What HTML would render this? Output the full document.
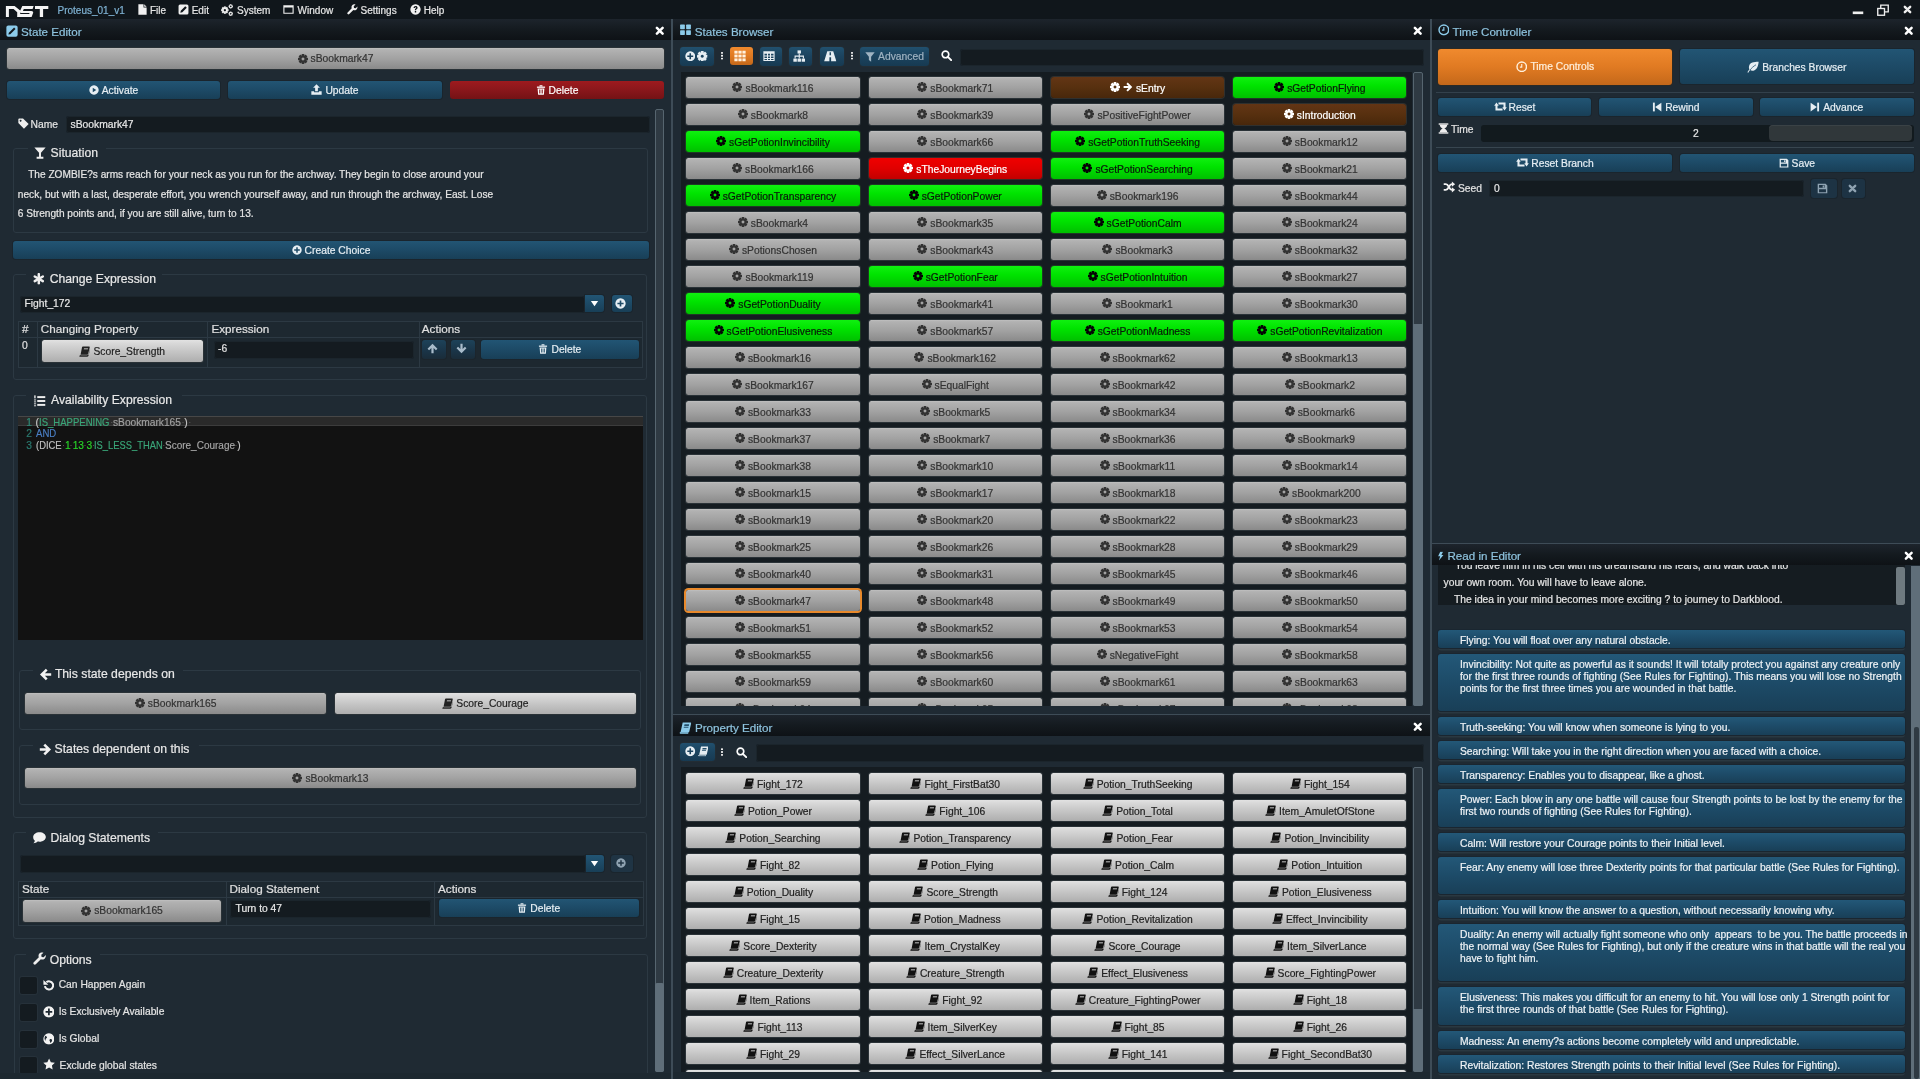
<!DOCTYPE html>
<html><head><meta charset="utf-8"><title>NST</title><style>
*{margin:0;padding:0;box-sizing:border-box}
html,body{width:1920px;height:1079px;overflow:hidden;background:#1f2a33;font-family:"Liberation Sans", sans-serif;-webkit-text-stroke-width:0.2px}
div,svg{position:absolute}
.t{white-space:nowrap;line-height:1}
.i{position:absolute}
.b{display:flex;align-items:center;justify-content:center;white-space:nowrap;line-height:1;border-radius:3px}
.b svg{position:static}
.gray{background:linear-gradient(#c0c0c0,#b2b2b2 8%,#a2a2a2 50%,#8a8a8a);color:#333;box-shadow:0 0 0 1px #2a3237;border-radius:2.5px}
.prop{background:linear-gradient(#e2e2e2,#d8d8d8 15%,#c4c4c4 55%,#aeaeae);color:#222;box-shadow:0 0 0 1px #2a3237;border-radius:2.5px}
.green{background:linear-gradient(#10f010,#00e400 40%,#00c000);color:#0a1a0a;box-shadow:0 0 0 1px #1e3a24}
.red{background:linear-gradient(#f00000,#e00000 50%,#c20000);color:#fff;box-shadow:0 0 0 1px #3a2a2a}
.brown{background:linear-gradient(#633515,#57300f 50%,#48270b);color:#fff;box-shadow:0 0 0 1px #30302e}
.blue{background:linear-gradient(#225574,#1d4a66 50%,#183f57);color:#e6eef3;box-shadow:0 0 0 1px #1a252d}
.dred{background:linear-gradient(#9e1a1e,#8a171b 50%,#741215);color:#fff}
.orange{background:linear-gradient(#f08a2e,#e07a22 50%,#c4681a);color:#fff}
.hdr{background:linear-gradient(#1d242c,#141a1f 50%,#0e1216)}
.inp{background:#141b20;border-radius:3px;box-shadow:inset 0 0 0 1px #1b252c}
.fs{border:1px solid #2c3943;border-radius:3px}
.sb{border:1px solid #56656f;border-radius:2px;background:#2f3a43}
</style></head>
<body>
<svg width="0" height="0" style="position:absolute">
<defs>
<symbol id="gear" viewBox="0 0 16 16"><g fill="currentColor"><path fill-rule="evenodd" d="M8 1.9a6.1 6.1 0 1 0 0.001 0z M8 5.7a2.3 2.3 0 1 1 -0.001 0z"/><g id="gt"><rect x="5.9" y="0" width="4.2" height="3.2" rx="0.6"/><rect x="5.9" y="12.8" width="4.2" height="3.2" rx="0.6"/><rect x="0" y="5.9" width="3.2" height="4.2" rx="0.6"/><rect x="12.8" y="5.9" width="3.2" height="4.2" rx="0.6"/></g><use href="#gt" transform="rotate(45 8 8)"/></g></symbol>
<symbol id="book" viewBox="0 0 16 16"><g fill="currentColor"><path d="M5.6 0.8h8.9c0.8 0 1.3 0.6 1.1 1.3L13.3 11.6c-0.2 0.6-0.7 1-1.3 1H2.3L4.4 1.8c0.2-0.6 0.6-1 1.2-1z"/><path d="M1.6 13.2h10.6c0.9 0 1.6-0.5 1.9-1.3L15.6 5.2l0.3 0.5-2.1 8.6c-0.3 1-1 1.5-2 1.5H1.8c-0.9 0-1.4-0.6-1.2-1.4z"/></g><path fill="#8a8a8a" d="M7.3 3h6l-0.4 2H6.8z"/><path fill="#e8e8e8" d="M2.1 13.3h10l-0.15 0.6h-10z" opacity="0.9"/></symbol>
<symbol id="bookl" viewBox="0 0 16 16"><path fill="currentColor" d="M4.6 0.8h10.6c0.5 0 0.8 0.4 0.7 0.9L13.4 12.6c-0.1 0.5-0.5 0.8-1 0.8H1.8L4.6 0.8z"/><path fill="currentColor" d="M1.6 13.4h10.8l-0.5 2.1H1.3c-0.7 0-1.1-0.5-1-1.1z"/><path fill="#24506c" d="M7 3h6.2l-0.45 2.2H6.5z M6.2 6.3h6.2l-0.3 1.2H5.9z"/><path fill="#24506c" d="M1.9 13.9h9.9l-0.15 0.5H1.75z"/></symbol>
<symbol id="close" viewBox="0 0 16 16"><path d="M3.2 3.2L12.8 12.8M12.8 3.2L3.2 12.8" stroke="currentColor" stroke-width="4.2" stroke-linecap="round"/></symbol>
<symbol id="plusc" viewBox="0 0 16 16"><path fill-rule="evenodd" fill="currentColor" d="M8 0.5a7.5 7.5 0 1 0 .001 0z M6.8 3.5h2.4v3.3h3.3v2.4H9.2v3.3H6.8V9.2H3.5V6.8h3.3z"/></symbol>
<symbol id="playc" viewBox="0 0 16 16"><path fill-rule="evenodd" fill="currentColor" d="M8 0.5a7.5 7.5 0 1 0 .001 0z M6 4.3l5.6 3.7L6 11.7z"/></symbol>
<symbol id="upload" viewBox="0 0 16 16"><g fill="currentColor"><path d="M8 0.5l5 5H10v5H6v-5H3z"/><path d="M0.5 10.5h4v1.5h7v-1.5h4v5h-15z"/></g></symbol>
<symbol id="trash" viewBox="0 0 16 16"><g fill="currentColor"><rect x="5.5" y="0.5" width="5" height="2" rx="0.6"/><rect x="1.5" y="2.5" width="13" height="2"/><path fill-rule="evenodd" d="M2.6 5.5h10.8l-0.8 10H3.4z M5 7v6.5h1.2V7z M7.4 7v6.5h1.2V7z M9.8 7v6.5h1.2V7z"/></g></symbol>
<symbol id="tag" viewBox="0 0 16 16"><path fill-rule="evenodd" fill="currentColor" d="M0.5 1.8v5.6l8.2 8.2 6.8-6.8-8.2-8.2H1.8a1.3 1.3 0 0 0-1.3 1.2z M3.8 2.6a1.3 1.3 0 1 0 .001 0z"/></symbol>
<symbol id="glass" viewBox="0 0 16 16"><g fill="currentColor"><path d="M0.5 0.5h15L9.3 7.8v5.2h3.2v2.5h-9v-2.5h3.2V7.8z"/></g></symbol>
<symbol id="asterisk" viewBox="0 0 16 16"><g stroke="currentColor" stroke-width="3.4" stroke-linecap="round"><path d="M8 1.5v13"/><path d="M2.4 4.8l11.2 6.4"/><path d="M2.4 11.2l11.2-6.4"/></g></symbol>
<symbol id="listol" viewBox="0 0 16 16"><g fill="currentColor"><rect x="5" y="1.5" width="11" height="2.6"/><rect x="5" y="6.7" width="11" height="2.6"/><rect x="5" y="11.9" width="11" height="2.6"/><rect x="1" y="0.5" width="1.8" height="4"/><rect x="0.6" y="6" width="2.8" height="1.2"/><rect x="0.6" y="8.6" width="2.8" height="1.2"/><rect x="0.6" y="11.2" width="2.8" height="1.2"/><rect x="0.6" y="13.8" width="2.8" height="1.2"/></g></symbol>
<symbol id="arrowl" viewBox="0 0 16 16"><path fill="currentColor" d="M1.2 8L8.4 0.8 10.6 3 7.2 6.4H15V9.6H7.2L10.6 13 8.4 15.2z"/></symbol>
<symbol id="arrowr" viewBox="0 0 16 16"><path fill="currentColor" d="M14.8 8L7.6 0.8 5.4 3 8.8 6.4H1V9.6H8.8L5.4 13 7.6 15.2z"/></symbol>
<symbol id="arrowu" viewBox="0 0 16 16"><path fill="currentColor" d="M8 1.2L15.2 8.4 13 10.6 9.6 7.2V15H6.4V7.2L3 10.6 0.8 8.4z"/></symbol>
<symbol id="arrowd" viewBox="0 0 16 16"><path fill="currentColor" d="M8 14.8L15.2 7.6 13 5.4 9.6 8.8V1H6.4V8.8L3 5.4 0.8 7.6z"/></symbol>
<symbol id="comment" viewBox="0 0 16 16"><path fill="currentColor" d="M8 1.5c4.2 0 7.5 2.5 7.5 5.6s-3.3 5.6-7.5 5.6c-0.8 0-1.5-0.1-2.2-0.2C4.5 13.6 2.8 14.5 0.8 14.6c1-1 1.6-2 1.7-3C1.3 10.6 0.5 9 0.5 7.1 0.5 4 3.8 1.5 8 1.5z"/></symbol>
<symbol id="wrench" viewBox="0 0 16 16"><path fill="currentColor" d="M15.2 3.6l-2.6 2.6-2.4-0.4-0.4-2.4 2.6-2.6C10.6 0.1 8.4 0.6 7.3 2.1 6.4 3.3 6.3 4.9 6.9 6.2L0.9 12.2a1.7 1.7 0 0 0 2.4 2.4l6-6c1.3 0.6 2.9 0.5 4.1-0.4 1.5-1.1 2-3.3 1.8-4.6z"/></symbol>
<symbol id="undo" viewBox="0 0 16 16"><path d="M4.6 4.4A5.6 5.6 0 1 1 2.6 9.6" fill="none" stroke="currentColor" stroke-width="2.8"/><path fill="currentColor" d="M0.6 1.2v6.6h6.6z"/></symbol>
<symbol id="globe" viewBox="0 0 16 16"><path fill-rule="evenodd" fill="currentColor" d="M8 0.5a7.5 7.5 0 1 0 .001 0z M3.2 3.6C4.5 3.9 5.6 5 5.4 6.2 5.2 7.2 4 7.4 3.6 8.4 3.3 9.2 3.9 10 3.4 10.6 2.6 10 2.1 8.9 2.1 7.6 2.1 6.1 2.5 4.7 3.2 3.6z M9.8 8.2C10.9 8 12 8.6 12.2 9.6 12.5 10.8 11.8 12 10.8 12.8 10 13.4 9.4 13 9.5 12.2 9.6 11.4 9 11 8.8 10.3 8.6 9.3 9 8.4 9.8 8.2z"/></symbol>
<symbol id="star" viewBox="0 0 16 16"><path fill="currentColor" d="M8 0.6l2.3 4.9 5.3 0.7-3.9 3.7 1 5.3L8 12.6l-4.7 2.6 1-5.3L0.4 6.2l5.3-0.7z"/></symbol>
<symbol id="clock" viewBox="0 0 16 16"><circle cx="8" cy="8" r="6.6" fill="none" stroke="currentColor" stroke-width="2"/><path d="M8 4.2v4.3h-2.6" fill="none" stroke="currentColor" stroke-width="1.6"/></symbol>
<symbol id="leaf" viewBox="0 0 16 16"><path fill="currentColor" d="M15.5 1C9 1 4 2 2.8 6.5 2.3 8.3 2.6 9.8 3.3 11 2.2 12.2 1.2 13.6 0.5 15l1.2 0.5c0.6-1.2 1.5-2.4 2.5-3.5C5.4 13 7.4 13.3 9.5 12.5 14 10.8 15.2 5 15.5 1z"/><path d="M4 12c2-2.5 4.5-5 8-7" stroke="#1f4d6d" stroke-width="1" fill="none"/></symbol>
<symbol id="retweet" viewBox="0 0 16 16"><g fill="currentColor"><path d="M0.2 7.2L3 3.1 5.8 7.2H4.3V10.5H10.5V12.9H1.8V7.2z"/><path d="M15.8 8.8L13 12.9 10.2 8.8H11.7V5.5H5.5V3.1H14.2V8.8z"/></g></symbol>
<symbol id="stepb" viewBox="0 0 16 16"><g fill="currentColor"><rect x="1.5" y="1" width="3" height="14"/><path d="M15 1v14L5 8z"/></g></symbol>
<symbol id="stepf" viewBox="0 0 16 16"><g fill="currentColor"><rect x="11.5" y="1" width="3" height="14"/><path d="M1 1v14l10-7z"/></g></symbol>
<symbol id="hourglass" viewBox="0 0 16 16"><g fill="currentColor"><rect x="1" y="0.5" width="14" height="2"/><rect x="1" y="13.5" width="14" height="2"/><path d="M2.5 2.5h11c0 3-2.5 4.5-4.3 5.5 1.8 1 4.3 2.5 4.3 5.5h-11c0-3 2.5-4.5 4.3-5.5C5 7 2.5 5.5 2.5 2.5z"/></g></symbol>
<symbol id="floppy" viewBox="0 0 16 16"><path fill-rule="evenodd" fill="currentColor" d="M1 1h11.5L15 3.5V15H1z M3 3v4h8V3z M8.2 3.6h2v2.8h-2z M3 9v4.5h10V9z"/></symbol>
<symbol id="random" viewBox="0 0 16 16"><g fill="none" stroke="currentColor" stroke-width="2.4"><path d="M0.5 4.2H3.5C7.5 4.2 7.5 11.8 11.5 11.8H12.5"/><path d="M0.5 11.8H3.5C7.5 11.8 7.5 4.2 11.5 4.2H12.5"/></g><g fill="currentColor"><path d="M11.5 0.8L15.8 4.2 11.5 7.6z"/><path d="M11.5 8.4L15.8 11.8 11.5 15.2z"/></g></symbol>
<symbol id="bolt" viewBox="0 0 16 16"><path fill="currentColor" d="M7.5 0.5h5L9.6 6.2h3.6L5.2 15.8l2.2-7.2H3.8z"/></symbol>
<symbol id="th" viewBox="0 0 16 16"><g fill="currentColor"><rect x="0.5" y="1" width="4.3" height="3.8"/><rect x="5.85" y="1" width="4.3" height="3.8"/><rect x="11.2" y="1" width="4.3" height="3.8"/><rect x="0.5" y="6.1" width="4.3" height="3.8"/><rect x="5.85" y="6.1" width="4.3" height="3.8"/><rect x="11.2" y="6.1" width="4.3" height="3.8"/><rect x="0.5" y="11.2" width="4.3" height="3.8"/><rect x="5.85" y="11.2" width="4.3" height="3.8"/><rect x="11.2" y="11.2" width="4.3" height="3.8"/></g></symbol>
<symbol id="table" viewBox="0 0 16 16"><path fill-rule="evenodd" fill="currentColor" d="M0.5 1.5h15v13h-15z M2 5v2.2h3.3V5z M6.7 5v2.2h2.6V5z M10.7 5v2.2H14V5z M2 8.5v2.2h3.3V8.5z M6.7 8.5v2.2h2.6V8.5z M10.7 8.5v2.2H14V8.5z M2 12v1.3h3.3V12z M6.7 12v1.3h2.6V12z M10.7 12v1.3H14V12z"/></symbol>
<symbol id="sitemap" viewBox="0 0 16 16"><g fill="currentColor"><rect x="5.8" y="0.5" width="4.4" height="4"/><rect x="0.5" y="11" width="4.4" height="4"/><rect x="5.8" y="11" width="4.4" height="4"/><rect x="11.1" y="11" width="4.4" height="4"/><path d="M7.3 4.5h1.4v2.6h5.3v3.9h-1.4V8.5H8.7v2.5H7.3V8.5H3.4v2.5H2V7.1h5.3z"/></g></symbol>
<symbol id="road" viewBox="0 0 16 16"><path fill-rule="evenodd" fill="currentColor" d="M4.2 1.5h7.6l4 13H0.2z M7.1 3v3.6h1.8V3z M6.9 9.3v5.2h2.2V9.3z"/></symbol>
<symbol id="filter" viewBox="0 0 16 16"><path fill="currentColor" d="M0.5 0.5h15L9.8 7.5v8l-3.6-2.8V7.5z"/></symbol>
<symbol id="search" viewBox="0 0 16 16"><circle cx="6.5" cy="6.5" r="4.8" fill="none" stroke="currentColor" stroke-width="2.4"/><path d="M10 10l4.8 4.8" stroke="currentColor" stroke-width="2.8" stroke-linecap="round"/></symbol>
<symbol id="vdots" viewBox="0 0 16 16"><g fill="currentColor"><rect x="6" y="0.5" width="4" height="3.6" rx="1.2"/><rect x="6" y="6.2" width="4" height="3.6" rx="1.2"/><rect x="6" y="11.9" width="4" height="3.6" rx="1.2"/></g></symbol>
<symbol id="file" viewBox="0 0 16 16"><path fill="currentColor" d="M2 0.5h7.5v4.5H14v10.5H2z M10.5 0.5l3.5 3.5h-3.5z"/></symbol>
<symbol id="edit" viewBox="0 0 16 16"><path fill-rule="evenodd" fill="currentColor" d="M3 0.8h10a2.2 2.2 0 0 1 2.2 2.2v10a2.2 2.2 0 0 1-2.2 2.2H3A2.2 2.2 0 0 1 0.8 13V3A2.2 2.2 0 0 1 3 0.8z M10.5 3.2L4 9.7 3.4 12.6l2.9-0.6 6.5-6.5z"/></symbol>
<symbol id="cogs" viewBox="0 0 16 16"><g fill="currentColor"><g transform="translate(0.2 3.2) scale(0.62)"><path fill-rule="evenodd" d="M8 1.9a6.1 6.1 0 1 0 0.001 0z M8 5.6a2.4 2.4 0 1 1 -0.001 0z"/><g id="gt2"><rect x="5.9" y="0" width="4.2" height="3.2"/><rect x="5.9" y="12.8" width="4.2" height="3.2"/><rect x="0" y="5.9" width="3.2" height="4.2"/><rect x="12.8" y="5.9" width="3.2" height="4.2"/></g><use href="#gt2" transform="rotate(45 8 8)"/></g><g transform="translate(10 0.2) scale(0.37)"><path fill-rule="evenodd" d="M8 1.9a6.1 6.1 0 1 0 0.001 0z M8 5.2a2.8 2.8 0 1 1 -0.001 0z"/><use href="#gt2"/><use href="#gt2" transform="rotate(45 8 8)"/></g><g transform="translate(10 10) scale(0.37)"><path fill-rule="evenodd" d="M8 1.9a6.1 6.1 0 1 0 0.001 0z M8 5.2a2.8 2.8 0 1 1 -0.001 0z"/><use href="#gt2"/><use href="#gt2" transform="rotate(45 8 8)"/></g></g></symbol>
<symbol id="windowi" viewBox="0 0 16 16"><path fill-rule="evenodd" fill="currentColor" d="M0.5 1.8h15v12.4h-15z M2.1 5.2v7.4h11.8V5.2z"/></symbol>
<symbol id="question" viewBox="0 0 16 16"><path fill-rule="evenodd" fill="currentColor" d="M8 0.5a7.5 7.5 0 1 0 .001 0z M5.2 5.8C5.3 4 6.5 3 8.1 3c1.7 0 2.9 1 2.9 2.4 0 1.1-0.6 1.7-1.4 2.2-0.6 0.4-0.7 0.6-0.7 1.2v0.4H7.1V8.6c0-1 0.3-1.5 1.1-2 0.5-0.3 0.8-0.6 0.8-1 0-0.5-0.4-0.8-0.9-0.8-0.6 0-1 0.4-1 1z M7 10.3h2v2.2H7z"/></symbol>
<symbol id="minimize" viewBox="0 0 16 16"><rect x="1" y="10" width="14" height="3.5" fill="currentColor"/></symbol>
<symbol id="restore" viewBox="0 0 16 16"><g fill="none" stroke="currentColor" stroke-width="1.8"><rect x="1" y="6" width="9" height="9"/><path d="M5 6V1.5h10v9h-5"/></g></symbol>
<symbol id="caretd" viewBox="0 0 16 16"><path fill="currentColor" d="M1.5 3.5h13L8 13z"/></symbol>
<symbol id="pencilsq" viewBox="0 0 16 16"><path fill-rule="evenodd" fill="currentColor" d="M3 0.5h10a2.5 2.5 0 0 1 2.5 2.5v10a2.5 2.5 0 0 1-2.5 2.5H3A2.5 2.5 0 0 1 0.5 13V3A2.5 2.5 0 0 1 3 0.5z M10.8 3.3L3.8 10.3 3.2 12.8l2.5-0.6 7-7z"/></symbol>
<symbol id="thl" viewBox="0 0 16 16"><g fill="currentColor"><rect x="0.5" y="0.8" width="6.6" height="6.4" rx="0.8"/><rect x="8.9" y="0.8" width="6.6" height="6.4" rx="0.8"/><rect x="0.5" y="8.8" width="6.6" height="6.4" rx="0.8"/><rect x="8.9" y="8.8" width="6.6" height="6.4" rx="0.8"/></g></symbol>
</defs>
</svg>
<div id="root" style="left:0;top:0;width:1920px;height:1079px;will-change:transform">
<div style="left:0px;top:0px;width:1920px;height:19px;background:#10161b"></div>
<svg style="left:0;top:0;width:52px;height:19px" viewBox="0 0 52 19"><g fill="#f4f4f4">
<path d="M5.9 5.9H14.6L20.2 10.6V16.9H17.2V12.2L13.6 9H8.9V16.9H5.9Z"/>
<path d="M22.3 5.9H33.6L32.6 9H23.8L22.9 10.9H31.2C33 10.9 33.6 12 33 13.3L31.6 16.9H17.6L18.8 13.9H29.2L29.6 13H21.3C19.8 13 19.6 12 20 11Z"/>
<path d="M35 5.9H48.3V9H43.1V16.9H39.8V9H35Z"/>
</g></svg>
<div class="t" style="left:57.50px;top:6.03px;font-size:10px;color:#7fb2d3;">Proteus_01_v1</div>
<svg class="i" style="left:136.8px;top:3.5px;width:11px;height:11px;color:#f0f0f0;" viewBox="0 0 16 16"><use href="#file"/></svg>
<div class="t" style="left:150.00px;top:6.03px;font-size:10px;color:#e6e6e6;">File</div>
<svg class="i" style="left:178.4px;top:3.5px;width:11px;height:11px;color:#f0f0f0;" viewBox="0 0 16 16"><use href="#edit"/></svg>
<div class="t" style="left:191.70px;top:6.03px;font-size:10px;color:#e6e6e6;">Edit</div>
<svg class="i" style="left:221px;top:3.5px;width:12px;height:12px;color:#f0f0f0;" viewBox="0 0 16 16"><use href="#cogs"/></svg>
<div class="t" style="left:237.00px;top:6.03px;font-size:10px;color:#e6e6e6;">System</div>
<svg class="i" style="left:283px;top:3.5px;width:11px;height:11px;color:#f0f0f0;" viewBox="0 0 16 16"><use href="#windowi"/></svg>
<div class="t" style="left:297.60px;top:6.03px;font-size:10px;color:#e6e6e6;">Window</div>
<svg class="i" style="left:346.7px;top:3.5px;width:11px;height:11px;color:#f0f0f0;" viewBox="0 0 16 16"><use href="#wrench"/></svg>
<div class="t" style="left:360.50px;top:6.03px;font-size:10px;color:#e6e6e6;">Settings</div>
<svg class="i" style="left:410.4px;top:3.5px;width:11px;height:11px;color:#f0f0f0;" viewBox="0 0 16 16"><use href="#question"/></svg>
<div class="t" style="left:423.70px;top:6.03px;font-size:10px;color:#e6e6e6;">Help</div>
<svg class="i" style="left:1852px;top:4px;width:12px;height:12px;color:#eee;" viewBox="0 0 16 16"><use href="#minimize"/></svg>
<svg class="i" style="left:1876px;top:4px;width:14px;height:12px;color:#eee;" viewBox="0 0 16 16"><use href="#restore"/></svg>
<svg class="i" style="left:1903px;top:5px;width:9px;height:9px;color:#eee;" viewBox="0 0 16 16"><use href="#close"/></svg>
<div class="hdr" style="left:0px;top:19px;width:671px;height:20.5px;"></div>
<svg class="i" style="left:6px;top:24.5px;width:12px;height:12px;color:#8ccbea;" viewBox="0 0 16 16"><use href="#pencilsq"/></svg>
<div class="t" style="left:21.00px;top:25.94px;font-size:11.6px;color:#8ec3de;">State Editor</div>
<svg class="i" style="left:654.8px;top:26px;width:9.5px;height:9.5px;color:#fff;" viewBox="0 0 16 16"><use href="#close"/></svg>
<div class="b gray" style="left:7px;top:48px;width:657px;height:21px;"><svg style="width:10px;height:10px;color:currentColor;flex:none;margin-right:3px;position:relative;top:0.0px" viewBox="0 0 16 16"><use href="#gear"/></svg><span style="font-size:10.3px;position:relative;top:1.0px">sBookmark47</span></div>
<div class="b blue" style="left:7px;top:80.5px;width:213px;height:18.5px;"><svg style="width:10px;height:10px;color:currentColor;flex:none;margin-right:3px;position:relative;top:0.0px" viewBox="0 0 16 16"><use href="#playc"/></svg><span style="font-size:10.3px;position:relative;top:1.0px">Activate</span></div>
<div class="b blue" style="left:228px;top:80.5px;width:214px;height:18.5px;"><svg style="width:11px;height:11px;color:currentColor;flex:none;margin-right:3px;position:relative;top:0.0px" viewBox="0 0 16 16"><use href="#upload"/></svg><span style="font-size:10.3px;position:relative;top:1.0px">Update</span></div>
<div class="b dred" style="left:450px;top:80.5px;width:214px;height:18.5px;"><svg style="width:10px;height:10px;color:currentColor;flex:none;margin-right:3px;position:relative;top:0.0px" viewBox="0 0 16 16"><use href="#trash"/></svg><span style="font-size:10.3px;position:relative;top:1.0px">Delete</span></div>
<div class="sb" style="left:655px;top:109px;width:9px;height:963px;"></div>
<div style="left:655px;top:983px;width:9px;height:89px;background:#5f6e79;border-radius:2px"></div>
<svg class="i" style="left:18px;top:117.5px;width:11px;height:11px;color:#eee;" viewBox="0 0 16 16"><use href="#tag"/></svg>
<div class="t" style="left:30.60px;top:119.79px;font-size:10.3px;color:#e4e4e4;">Name</div>
<div class="inp" style="left:66px;top:116px;width:583.6px;height:17px;"></div>
<div class="t" style="left:70.60px;top:119.79px;font-size:10.3px;color:#e8e8e8;">sBookmark47</div>
<div class="fs" style="left:13.3px;top:147.5px;width:634.4px;height:85px;"></div>
<div style="left:28px;top:140px;width:78px;height:14px;background:#1f2a33"></div>
<svg class="i" style="left:34px;top:147px;width:12px;height:12px;color:#eee;" viewBox="0 0 16 16"><use href="#glass"/></svg>
<div class="t" style="left:50.60px;top:146.87px;font-size:12.2px;color:#e8e8e8;">Situation</div>
<div class="t" style="left:28.20px;top:170.31px;font-size:10.12px;color:#e6e6e6;">The ZOMBIE?s arms reach for your neck as you run for the archway. They begin to close around your</div>
<div class="t" style="left:17.80px;top:189.81px;font-size:10.17px;color:#e6e6e6;">neck, but with a last, desperate effort, you wrench yourself away, and run through the archway, East. Lose</div>
<div class="t" style="left:17.80px;top:209.31px;font-size:10.15px;color:#e6e6e6;">6 Strength points and, if you are still alive, turn to 13.</div>
<div class="b blue" style="left:13px;top:240.8px;width:636px;height:17.8px;"><svg style="width:10px;height:10px;color:currentColor;flex:none;margin-right:3px;position:relative;top:0.0px" viewBox="0 0 16 16"><use href="#plusc"/></svg><span style="font-size:10.3px;position:relative;top:1.0px">Create Choice</span></div>
<div class="fs" style="left:13.3px;top:273.5px;width:634px;height:106.5px;"></div>
<div style="left:26px;top:266px;width:136px;height:14px;background:#1f2a33"></div>
<svg class="i" style="left:33.4px;top:273px;width:11.6px;height:11.6px;color:#eee;" viewBox="0 0 16 16"><use href="#asterisk"/></svg>
<div class="t" style="left:49.70px;top:272.87px;font-size:12.2px;color:#e8e8e8;">Change Expression</div>
<div class="inp" style="left:20px;top:295.7px;width:565.4px;height:17px;"></div>
<div class="t" style="left:24.50px;top:299.29px;font-size:10.3px;color:#e8e8e8;">Fight_172</div>
<div class="b blue" style="left:585.4px;top:294.8px;width:18.6px;height:17.5px;border-radius:0 3px 3px 0"></div>
<svg class="i" style="left:589px;top:299px;width:11px;height:9px;color:#fff;" viewBox="0 0 16 16"><use href="#caretd"/></svg>
<div class="b blue" style="left:611.7px;top:294.8px;width:20.3px;height:17.5px;"><svg style="width:11px;height:11px;color:currentColor;flex:none;margin-right:3px;position:relative;top:0.0px" viewBox="0 0 16 16"><use href="#plusc"/></svg></div>
<div style="left:18px;top:321px;width:625.2px;height:47px;border:1px solid #2c3943;background:#1d2830"></div>
<div style="left:18px;top:337px;width:625.2px;height:1px;background:#2c3943"></div>
<div style="left:37px;top:321px;width:1px;height:47px;background:#2c3943"></div>
<div style="left:207px;top:321px;width:1px;height:47px;background:#2c3943"></div>
<div style="left:418.5px;top:321px;width:1px;height:47px;background:#2c3943"></div>
<div class="t" style="left:22.00px;top:323.23px;font-size:11.7px;color:#e0e0e0;">#</div>
<div class="t" style="left:40.80px;top:323.23px;font-size:11.7px;color:#e0e0e0;">Changing Property</div>
<div class="t" style="left:211.40px;top:323.23px;font-size:11.7px;color:#e0e0e0;">Expression</div>
<div class="t" style="left:421.80px;top:323.23px;font-size:11.7px;color:#e0e0e0;">Actions</div>
<div class="t" style="left:22.00px;top:340.79px;font-size:10.3px;color:#e0e0e0;">0</div>
<div class="b prop" style="left:41.5px;top:340.4px;width:161.5px;height:22px;"><svg style="width:11px;height:11px;color:currentColor;flex:none;margin-right:3px;position:relative;top:0.3px" viewBox="0 0 16 16"><use href="#book"/></svg><span style="font-size:10.3px;position:relative;top:1px">Score_Strength</span></div>
<div class="inp" style="left:213.6px;top:340.5px;width:200px;height:18px;"></div>
<div class="t" style="left:218.00px;top:344.29px;font-size:10.3px;color:#e0e0e0;">-6</div>
<div class="b blue" style="left:422px;top:340px;width:24px;height:18.6px;background:linear-gradient(#1d4259,#1a3447 60%,#1a2c39);box-shadow:0 0 0 1px #1c252c"><svg style="width:11px;height:11px;color:#a9bccb;flex:none;margin-right:3px;position:relative;top:-0.5px" viewBox="0 0 16 16"><use href="#arrowu"/></svg></div>
<div class="b blue" style="left:451px;top:340px;width:24px;height:18.6px;background:linear-gradient(#1d4259,#1a3447 60%,#1a2c39);box-shadow:0 0 0 1px #1c252c"><svg style="width:11px;height:11px;color:#a9bccb;flex:none;margin-right:3px;position:relative;top:-0.5px" viewBox="0 0 16 16"><use href="#arrowd"/></svg></div>
<div class="b blue" style="left:481px;top:340px;width:157.7px;height:18.6px;"><svg style="width:10px;height:10px;color:currentColor;flex:none;margin-right:3px;position:relative;top:0.0px" viewBox="0 0 16 16"><use href="#trash"/></svg><span style="font-size:10.3px;position:relative;top:1.0px">Delete</span></div>
<div class="fs" style="left:13.3px;top:394.6px;width:634px;height:423.4px;"></div>
<div style="left:26px;top:387px;width:156px;height:14px;background:#1f2a33"></div>
<svg class="i" style="left:32.6px;top:395px;width:13px;height:12px;color:#eee;" viewBox="0 0 16 16"><use href="#listol"/></svg>
<div class="t" style="left:51.00px;top:394.47px;font-size:12.2px;color:#e8e8e8;">Availability Expression</div>
<div style="left:18px;top:415.6px;width:625.4px;height:224.4px;background:#121212"></div>
<div style="left:18px;top:415.6px;width:625.4px;height:10.8px;background:#2a2a2a;border-top:1px solid #474747;border-bottom:1px solid #3c3c3c"></div>
<div class="t" style="left:26.20px;top:417.90px;font-size:10.2px;color:#2f8a76;">1</div>
<div class="t" style="left:26.20px;top:429.00px;font-size:10.2px;color:#2a7a70;">2</div>
<div class="t" style="left:26.20px;top:440.90px;font-size:10.2px;color:#2a7a70;">3</div>
<div class="t" style="left:35.60px;top:417.89px;font-size:10.3px;color:#c8c8c8;-webkit-text-stroke-width:0.15px;transform:scaleX(1.000);transform-origin:0 0">(</div>
<div class="t" style="left:39.40px;top:417.90px;font-size:10.2px;color:#3aa679;-webkit-text-stroke-width:0.15px;transform:scaleX(0.936);transform-origin:0 0">IS_HAPPENING</div>
<div class="t" style="left:110.30px;top:418.04px;font-size:9px;color:#5a5a5a;-webkit-text-stroke-width:0.15px;transform:scaleX(1.000);transform-origin:0 0">·</div>
<div class="t" style="left:113.00px;top:417.90px;font-size:10.2px;color:#a0a0a0;-webkit-text-stroke-width:0.15px;transform:scaleX(1.000);transform-origin:0 0">sBookmark165</div>
<div class="t" style="left:181.40px;top:418.04px;font-size:9px;color:#5a5a5a;-webkit-text-stroke-width:0.15px;transform:scaleX(1.000);transform-origin:0 0">·</div>
<div class="t" style="left:184.20px;top:417.89px;font-size:10.3px;color:#c8c8c8;-webkit-text-stroke-width:0.15px;transform:scaleX(1.000);transform-origin:0 0">)</div>
<div class="t" style="left:188.30px;top:418.04px;font-size:9px;color:#5a5a5a;-webkit-text-stroke-width:0.15px;transform:scaleX(1.000);transform-origin:0 0">·</div>
<div class="t" style="left:36.00px;top:429.00px;font-size:10.2px;color:#4a7fc4;-webkit-text-stroke-width:0.15px;transform:scaleX(0.941);transform-origin:0 0">AND</div>
<div class="t" style="left:35.60px;top:440.90px;font-size:10.2px;color:#c0c0c0;-webkit-text-stroke-width:0.15px;transform:scaleX(0.922);transform-origin:0 0">(DICE</div>
<div class="t" style="left:62.00px;top:441.04px;font-size:9px;color:#5a5a5a;-webkit-text-stroke-width:0.15px;transform:scaleX(1.000);transform-origin:0 0">·</div>
<div class="t" style="left:65.00px;top:440.90px;font-size:10.2px;color:#28d628;-webkit-text-stroke-width:0.15px;transform:scaleX(1.000);transform-origin:0 0">1</div>
<div class="t" style="left:69.60px;top:441.04px;font-size:9px;color:#5a5a5a;-webkit-text-stroke-width:0.15px;transform:scaleX(1.000);transform-origin:0 0">·</div>
<div class="t" style="left:72.70px;top:440.90px;font-size:10.2px;color:#28d628;-webkit-text-stroke-width:0.15px;transform:scaleX(1.000);transform-origin:0 0">13</div>
<div class="t" style="left:83.50px;top:441.04px;font-size:9px;color:#5a5a5a;-webkit-text-stroke-width:0.15px;transform:scaleX(1.000);transform-origin:0 0">·</div>
<div class="t" style="left:86.50px;top:440.90px;font-size:10.2px;color:#28d628;-webkit-text-stroke-width:0.15px;transform:scaleX(1.000);transform-origin:0 0">3</div>
<div class="t" style="left:91.90px;top:441.04px;font-size:9px;color:#5a5a5a;-webkit-text-stroke-width:0.15px;transform:scaleX(1.000);transform-origin:0 0">·</div>
<div class="t" style="left:94.40px;top:440.90px;font-size:10.2px;color:#3aa679;-webkit-text-stroke-width:0.15px;transform:scaleX(0.919);transform-origin:0 0">IS_LESS_THAN</div>
<div class="t" style="left:162.30px;top:441.04px;font-size:9px;color:#5a5a5a;-webkit-text-stroke-width:0.15px;transform:scaleX(1.000);transform-origin:0 0">·</div>
<div class="t" style="left:165.00px;top:440.93px;font-size:10px;color:#a8a8a8;-webkit-text-stroke-width:0.15px;transform:scaleX(1.000);transform-origin:0 0">Score_Courage</div>
<div class="t" style="left:234.50px;top:441.04px;font-size:9px;color:#5a5a5a;-webkit-text-stroke-width:0.15px;transform:scaleX(1.000);transform-origin:0 0">·</div>
<div class="t" style="left:237.30px;top:440.89px;font-size:10.3px;color:#c8c8c8;-webkit-text-stroke-width:0.15px;transform:scaleX(1.000);transform-origin:0 0">)</div>
<div class="fs" style="left:19.3px;top:669.7px;width:622px;height:60px;"></div>
<div style="left:33px;top:662px;width:150px;height:14px;background:#1f2a33"></div>
<svg class="i" style="left:38.8px;top:667.8px;width:13px;height:13px;color:#f2f2f2;" viewBox="0 0 16 16"><use href="#arrowl"/></svg>
<div class="t" style="left:54.90px;top:668.37px;font-size:12.2px;color:#e8e8e8;">This state depends on</div>
<div class="b gray" style="left:25.2px;top:692.6px;width:301px;height:21.2px;"><svg style="width:10px;height:10px;color:currentColor;flex:none;margin-right:3px;position:relative;top:0.0px" viewBox="0 0 16 16"><use href="#gear"/></svg><span style="font-size:10.3px;position:relative;top:1.0px">sBookmark165</span></div>
<div class="b prop" style="left:335px;top:692.6px;width:300.7px;height:21.2px;"><svg style="width:11px;height:11px;color:currentColor;flex:none;margin-right:3px;position:relative;top:0.3px" viewBox="0 0 16 16"><use href="#book"/></svg><span style="font-size:10.3px;position:relative;top:1px">Score_Courage</span></div>
<div class="fs" style="left:19.3px;top:744.5px;width:622px;height:60.5px;"></div>
<div style="left:33px;top:737px;width:166px;height:14px;background:#1f2a33"></div>
<svg class="i" style="left:38.5px;top:742.8px;width:13px;height:13px;color:#f2f2f2;" viewBox="0 0 16 16"><use href="#arrowr"/></svg>
<div class="t" style="left:54.60px;top:743.37px;font-size:12.2px;color:#e8e8e8;">States dependent on this</div>
<div class="b gray" style="left:25.2px;top:767.5px;width:610.5px;height:20.8px;"><svg style="width:10px;height:10px;color:currentColor;flex:none;margin-right:3px;position:relative;top:0.0px" viewBox="0 0 16 16"><use href="#gear"/></svg><span style="font-size:10.3px;position:relative;top:1.0px">sBookmark13</span></div>
<div class="fs" style="left:13.3px;top:832.3px;width:634px;height:107.1px;"></div>
<div style="left:26px;top:825px;width:132px;height:14px;background:#1f2a33"></div>
<svg class="i" style="left:32.4px;top:831.2px;width:15px;height:13.5px;color:#f2f2f2;" viewBox="0 0 16 16"><use href="#comment"/></svg>
<div class="t" style="left:50.40px;top:832.27px;font-size:12.2px;color:#e8e8e8;">Dialog Statements</div>
<div class="inp" style="left:20px;top:854.9px;width:565.5px;height:17.8px;"></div>
<div class="b blue" style="left:585.5px;top:854.7px;width:18.1px;height:17.3px;border-radius:0 3px 3px 0"></div>
<svg class="i" style="left:589px;top:859px;width:11px;height:9px;color:#fff;" viewBox="0 0 16 16"><use href="#caretd"/></svg>
<div class="b blue" style="left:611.3px;top:854.7px;width:21.7px;height:17.3px;background:#1f3444"><svg style="width:10px;height:10px;color:#8fa3b2;flex:none;margin-right:3px;position:relative;top:0.0px" viewBox="0 0 16 16"><use href="#plusc"/></svg></div>
<div style="left:18px;top:880.8px;width:625.7px;height:45.2px;border:1px solid #2c3943;background:#1d2830"></div>
<div style="left:18px;top:897px;width:625.7px;height:1px;background:#2c3943"></div>
<div style="left:225.5px;top:880.8px;width:1px;height:45.2px;background:#2c3943"></div>
<div style="left:434.4px;top:880.8px;width:1px;height:45.2px;background:#2c3943"></div>
<div class="t" style="left:22.00px;top:882.93px;font-size:11.7px;color:#e0e0e0;">State</div>
<div class="t" style="left:229.50px;top:882.93px;font-size:11.7px;color:#e0e0e0;">Dialog Statement</div>
<div class="t" style="left:438.00px;top:882.93px;font-size:11.7px;color:#e0e0e0;">Actions</div>
<div class="b gray" style="left:23px;top:899.6px;width:198px;height:22px;"><svg style="width:10px;height:10px;color:currentColor;flex:none;margin-right:3px;position:relative;top:0.0px" viewBox="0 0 16 16"><use href="#gear"/></svg><span style="font-size:10.3px;position:relative;top:1.0px">sBookmark165</span></div>
<div class="inp" style="left:230.3px;top:900px;width:200.7px;height:17.5px;"></div>
<div class="t" style="left:235.50px;top:903.79px;font-size:10.3px;color:#e8e8e8;">Turn to 47</div>
<div class="b blue" style="left:439px;top:899.3px;width:199.5px;height:17.5px;"><svg style="width:10px;height:10px;color:currentColor;flex:none;margin-right:3px;position:relative;top:0.0px" viewBox="0 0 16 16"><use href="#trash"/></svg><span style="font-size:10.3px;position:relative;top:1.0px">Delete</span></div>
<div class="fs" style="left:13.6px;top:953.5px;width:634px;height:130px;"></div>
<div style="left:26px;top:946px;width:74px;height:14px;background:#1f2a33"></div>
<svg class="i" style="left:32.5px;top:952px;width:13.5px;height:13.5px;color:#eee;" viewBox="0 0 16 16"><use href="#wrench"/></svg>
<div class="t" style="left:49.70px;top:953.67px;font-size:12.2px;color:#e8e8e8;">Options</div>
<div style="left:20px;top:977.4px;width:17.3px;height:16.8px;background:#141b20;border-radius:2px;box-shadow:0 0 0 1px #26313a"></div>
<svg class="i" style="left:42.6px;top:979.0px;width:11.8px;height:11.8px;color:#f2f2f2;" viewBox="0 0 16 16"><use href="#undo"/></svg>
<div class="t" style="left:58.70px;top:979.99px;font-size:10.3px;color:#e4e4e4;">Can Happen Again</div>
<div style="left:20px;top:1003.8px;width:17.3px;height:16.8px;background:#141b20;border-radius:2px;box-shadow:0 0 0 1px #26313a"></div>
<svg class="i" style="left:42.6px;top:1006.0999999999999px;width:11.8px;height:11.8px;color:#f2f2f2;" viewBox="0 0 16 16"><use href="#plusc"/></svg>
<div class="t" style="left:58.70px;top:1007.09px;font-size:10.3px;color:#e4e4e4;">Is Exclusively Available</div>
<div style="left:20px;top:1030.9px;width:17.3px;height:16.8px;background:#141b20;border-radius:2px;box-shadow:0 0 0 1px #26313a"></div>
<svg class="i" style="left:42.6px;top:1033.0px;width:11.8px;height:11.8px;color:#f2f2f2;" viewBox="0 0 16 16"><use href="#globe"/></svg>
<div class="t" style="left:58.70px;top:1033.99px;font-size:10.3px;color:#e4e4e4;">Is Global</div>
<div style="left:20px;top:1057.3px;width:17.3px;height:16.8px;background:#141b20;border-radius:2px;box-shadow:0 0 0 1px #26313a"></div>
<svg class="i" style="left:42.6px;top:1058.3999999999999px;width:12.2px;height:12.2px;color:#f2f2f2;" viewBox="0 0 16 16"><use href="#star"/></svg>
<div class="t" style="left:59.60px;top:1060.59px;font-size:10.3px;color:#e4e4e4;">Exclude global states</div>
<div style="left:0px;top:1072.5px;width:671px;height:6.5px;background:#1d2830"></div>
<div style="left:671.2px;top:19px;width:1.8px;height:1060px;background:#3e4c57"></div>
<div class="hdr" style="left:673px;top:19px;width:757px;height:20.5px;"></div>
<svg class="i" style="left:679px;top:24px;width:13px;height:11.5px;color:#8ccbea;" viewBox="0 0 16 16"><use href="#thl"/></svg>
<div class="t" style="left:694.80px;top:25.94px;font-size:11.6px;color:#8ec3de;">States Browser</div>
<svg class="i" style="left:1412.5px;top:26px;width:9.5px;height:9.5px;color:#fff;" viewBox="0 0 16 16"><use href="#close"/></svg>
<div class="b blue" style="left:680.3px;top:47.3px;width:33.6px;height:18.4px;background:linear-gradient(#21506e,#1b435e 50%,#173a52);box-shadow:0 0 0 1px #232d34"><svg style="width:10.5px;height:10.5px;color:currentColor;flex:none;margin-right:2px;position:relative;top:-0.5px" viewBox="0 0 16 16"><use href="#plusc"/></svg><svg style="width:10.5px;height:10.5px;color:currentColor;flex:none;margin-right:2px;position:relative;top:-0.5px" viewBox="0 0 16 16"><use href="#gear"/></svg></div>
<svg class="i" style="left:717.5px;top:50.6px;width:8px;height:9.5px;color:#eee;" viewBox="0 0 16 16"><use href="#vdots"/></svg>
<div class="b orange" style="left:729.7px;top:46.8px;width:23px;height:18.7px;"><svg style="width:12px;height:12px;color:#fff2e0;flex:none;margin-right:3px;position:relative;top:-0.5px" viewBox="0 0 16 16"><use href="#th"/></svg></div>
<div class="b blue" style="left:760px;top:47.3px;width:21.5px;height:18.4px;background:linear-gradient(#21506e,#1b435e 50%,#173a52);box-shadow:0 0 0 1px #232d34"><svg style="width:12px;height:12px;color:currentColor;flex:none;margin-right:3px;position:relative;top:-0.5px" viewBox="0 0 16 16"><use href="#table"/></svg></div>
<div class="b blue" style="left:789px;top:47.3px;width:22.7px;height:18.4px;background:linear-gradient(#21506e,#1b435e 50%,#173a52);box-shadow:0 0 0 1px #232d34"><svg style="width:12.5px;height:12.5px;color:currentColor;flex:none;margin-right:3px;position:relative;top:-0.5px" viewBox="0 0 16 16"><use href="#sitemap"/></svg></div>
<div class="b blue" style="left:819.8px;top:47.3px;width:24px;height:18.4px;background:linear-gradient(#21506e,#1b435e 50%,#173a52);box-shadow:0 0 0 1px #232d34"><svg style="width:12.5px;height:12.5px;color:currentColor;flex:none;margin-right:3px;position:relative;top:-0.5px" viewBox="0 0 16 16"><use href="#road"/></svg></div>
<svg class="i" style="left:847.5px;top:50.6px;width:8px;height:9.5px;color:#eee;" viewBox="0 0 16 16"><use href="#vdots"/></svg>
<div class="b blue" style="left:860px;top:47px;width:69px;height:19px;background:linear-gradient(#21506e,#1b435e 50%,#173a52);box-shadow:0 0 0 1px #232d34;color:#9fb3c2"><svg style="width:10px;height:10px;color:#9fb3c2;flex:none;margin-right:3px;position:relative;top:0.0px" viewBox="0 0 16 16"><use href="#filter"/></svg><span style="font-size:10.3px;position:relative;top:1.0px">Advanced</span></div>
<svg class="i" style="left:941px;top:50px;width:11px;height:11px;color:#fff;" viewBox="0 0 16 16"><use href="#search"/></svg>
<div class="inp" style="left:960px;top:48.6px;width:463.5px;height:17.6px;"></div>
<div style="left:681px;top:72px;width:731px;height:634px;background:#151c21"></div>
<div style="left:681px;top:71px;width:731px;height:635px;overflow:hidden">
<div class="b gray" style="left:5.2999999999999545px;top:6.0px;width:173.3px;height:21.3px;"><svg style="width:10px;height:10px;color:#333;flex:none;margin-right:3px;position:relative;top:-0.7px" viewBox="0 0 16 16"><use href="#gear"/></svg><span style="font-size:10.3px;position:relative;top:1.0px">sBookmark116</span></div>
<div class="b gray" style="left:187.60000000000002px;top:6.0px;width:173.3px;height:21.3px;"><svg style="width:10px;height:10px;color:#333;flex:none;margin-right:3px;position:relative;top:-0.7px" viewBox="0 0 16 16"><use href="#gear"/></svg><span style="font-size:10.3px;position:relative;top:1.0px">sBookmark71</span></div>
<div class="b brown" style="left:369.9000000000001px;top:6.0px;width:173.3px;height:21.3px;"><svg style="width:10px;height:10px;color:#fff;flex:none;margin-right:3px;position:relative;top:-0.7px" viewBox="0 0 16 16"><use href="#gear"/></svg><svg style="width:10px;height:10px;color:#fff;flex:none;margin-right:3px;position:relative;top:-0.7px" viewBox="0 0 16 16"><use href="#arrowr"/></svg><span style="font-size:10.3px;position:relative;top:1.0px">sEntry</span></div>
<div class="b green" style="left:552.2px;top:6.0px;width:173.3px;height:21.3px;"><svg style="width:10px;height:10px;color:#050505;flex:none;margin-right:3px;position:relative;top:-0.7px" viewBox="0 0 16 16"><use href="#gear"/></svg><span style="font-size:10.3px;position:relative;top:1.0px">sGetPotionFlying</span></div>
<div class="b gray" style="left:5.2999999999999545px;top:33.0px;width:173.3px;height:21.3px;"><svg style="width:10px;height:10px;color:#333;flex:none;margin-right:3px;position:relative;top:-0.7px" viewBox="0 0 16 16"><use href="#gear"/></svg><span style="font-size:10.3px;position:relative;top:1.0px">sBookmark8</span></div>
<div class="b gray" style="left:187.60000000000002px;top:33.0px;width:173.3px;height:21.3px;"><svg style="width:10px;height:10px;color:#333;flex:none;margin-right:3px;position:relative;top:-0.7px" viewBox="0 0 16 16"><use href="#gear"/></svg><span style="font-size:10.3px;position:relative;top:1.0px">sBookmark39</span></div>
<div class="b gray" style="left:369.9000000000001px;top:33.0px;width:173.3px;height:21.3px;"><svg style="width:10px;height:10px;color:#333;flex:none;margin-right:3px;position:relative;top:-0.7px" viewBox="0 0 16 16"><use href="#gear"/></svg><span style="font-size:10.3px;position:relative;top:1.0px">sPositiveFightPower</span></div>
<div class="b brown" style="left:552.2px;top:33.0px;width:173.3px;height:21.3px;"><svg style="width:10px;height:10px;color:#fff;flex:none;margin-right:3px;position:relative;top:-0.7px" viewBox="0 0 16 16"><use href="#gear"/></svg><span style="font-size:10.3px;position:relative;top:1.0px">sIntroduction</span></div>
<div class="b green" style="left:5.2999999999999545px;top:60.0px;width:173.3px;height:21.3px;"><svg style="width:10px;height:10px;color:#050505;flex:none;margin-right:3px;position:relative;top:-0.7px" viewBox="0 0 16 16"><use href="#gear"/></svg><span style="font-size:10.3px;position:relative;top:1.0px">sGetPotionInvincibility</span></div>
<div class="b gray" style="left:187.60000000000002px;top:60.0px;width:173.3px;height:21.3px;"><svg style="width:10px;height:10px;color:#333;flex:none;margin-right:3px;position:relative;top:-0.7px" viewBox="0 0 16 16"><use href="#gear"/></svg><span style="font-size:10.3px;position:relative;top:1.0px">sBookmark66</span></div>
<div class="b green" style="left:369.9000000000001px;top:60.0px;width:173.3px;height:21.3px;"><svg style="width:10px;height:10px;color:#050505;flex:none;margin-right:3px;position:relative;top:-0.7px" viewBox="0 0 16 16"><use href="#gear"/></svg><span style="font-size:10.3px;position:relative;top:1.0px">sGetPotionTruthSeeking</span></div>
<div class="b gray" style="left:552.2px;top:60.0px;width:173.3px;height:21.3px;"><svg style="width:10px;height:10px;color:#333;flex:none;margin-right:3px;position:relative;top:-0.7px" viewBox="0 0 16 16"><use href="#gear"/></svg><span style="font-size:10.3px;position:relative;top:1.0px">sBookmark12</span></div>
<div class="b gray" style="left:5.2999999999999545px;top:87.0px;width:173.3px;height:21.3px;"><svg style="width:10px;height:10px;color:#333;flex:none;margin-right:3px;position:relative;top:-0.7px" viewBox="0 0 16 16"><use href="#gear"/></svg><span style="font-size:10.3px;position:relative;top:1.0px">sBookmark166</span></div>
<div class="b red" style="left:187.60000000000002px;top:87.0px;width:173.3px;height:21.3px;"><svg style="width:10px;height:10px;color:#fff;flex:none;margin-right:3px;position:relative;top:-0.7px" viewBox="0 0 16 16"><use href="#gear"/></svg><span style="font-size:10.3px;position:relative;top:1.0px">sTheJourneyBegins</span></div>
<div class="b green" style="left:369.9000000000001px;top:87.0px;width:173.3px;height:21.3px;"><svg style="width:10px;height:10px;color:#050505;flex:none;margin-right:3px;position:relative;top:-0.7px" viewBox="0 0 16 16"><use href="#gear"/></svg><span style="font-size:10.3px;position:relative;top:1.0px">sGetPotionSearching</span></div>
<div class="b gray" style="left:552.2px;top:87.0px;width:173.3px;height:21.3px;"><svg style="width:10px;height:10px;color:#333;flex:none;margin-right:3px;position:relative;top:-0.7px" viewBox="0 0 16 16"><use href="#gear"/></svg><span style="font-size:10.3px;position:relative;top:1.0px">sBookmark21</span></div>
<div class="b green" style="left:5.2999999999999545px;top:114.0px;width:173.3px;height:21.3px;"><svg style="width:10px;height:10px;color:#050505;flex:none;margin-right:3px;position:relative;top:-0.7px" viewBox="0 0 16 16"><use href="#gear"/></svg><span style="font-size:10.3px;position:relative;top:1.0px">sGetPotionTransparency</span></div>
<div class="b green" style="left:187.60000000000002px;top:114.0px;width:173.3px;height:21.3px;"><svg style="width:10px;height:10px;color:#050505;flex:none;margin-right:3px;position:relative;top:-0.7px" viewBox="0 0 16 16"><use href="#gear"/></svg><span style="font-size:10.3px;position:relative;top:1.0px">sGetPotionPower</span></div>
<div class="b gray" style="left:369.9000000000001px;top:114.0px;width:173.3px;height:21.3px;"><svg style="width:10px;height:10px;color:#333;flex:none;margin-right:3px;position:relative;top:-0.7px" viewBox="0 0 16 16"><use href="#gear"/></svg><span style="font-size:10.3px;position:relative;top:1.0px">sBookmark196</span></div>
<div class="b gray" style="left:552.2px;top:114.0px;width:173.3px;height:21.3px;"><svg style="width:10px;height:10px;color:#333;flex:none;margin-right:3px;position:relative;top:-0.7px" viewBox="0 0 16 16"><use href="#gear"/></svg><span style="font-size:10.3px;position:relative;top:1.0px">sBookmark44</span></div>
<div class="b gray" style="left:5.2999999999999545px;top:141.0px;width:173.3px;height:21.3px;"><svg style="width:10px;height:10px;color:#333;flex:none;margin-right:3px;position:relative;top:-0.7px" viewBox="0 0 16 16"><use href="#gear"/></svg><span style="font-size:10.3px;position:relative;top:1.0px">sBookmark4</span></div>
<div class="b gray" style="left:187.60000000000002px;top:141.0px;width:173.3px;height:21.3px;"><svg style="width:10px;height:10px;color:#333;flex:none;margin-right:3px;position:relative;top:-0.7px" viewBox="0 0 16 16"><use href="#gear"/></svg><span style="font-size:10.3px;position:relative;top:1.0px">sBookmark35</span></div>
<div class="b green" style="left:369.9000000000001px;top:141.0px;width:173.3px;height:21.3px;"><svg style="width:10px;height:10px;color:#050505;flex:none;margin-right:3px;position:relative;top:-0.7px" viewBox="0 0 16 16"><use href="#gear"/></svg><span style="font-size:10.3px;position:relative;top:1.0px">sGetPotionCalm</span></div>
<div class="b gray" style="left:552.2px;top:141.0px;width:173.3px;height:21.3px;"><svg style="width:10px;height:10px;color:#333;flex:none;margin-right:3px;position:relative;top:-0.7px" viewBox="0 0 16 16"><use href="#gear"/></svg><span style="font-size:10.3px;position:relative;top:1.0px">sBookmark24</span></div>
<div class="b gray" style="left:5.2999999999999545px;top:168.0px;width:173.3px;height:21.3px;"><svg style="width:10px;height:10px;color:#333;flex:none;margin-right:3px;position:relative;top:-0.7px" viewBox="0 0 16 16"><use href="#gear"/></svg><span style="font-size:10.3px;position:relative;top:1.0px">sPotionsChosen</span></div>
<div class="b gray" style="left:187.60000000000002px;top:168.0px;width:173.3px;height:21.3px;"><svg style="width:10px;height:10px;color:#333;flex:none;margin-right:3px;position:relative;top:-0.7px" viewBox="0 0 16 16"><use href="#gear"/></svg><span style="font-size:10.3px;position:relative;top:1.0px">sBookmark43</span></div>
<div class="b gray" style="left:369.9000000000001px;top:168.0px;width:173.3px;height:21.3px;"><svg style="width:10px;height:10px;color:#333;flex:none;margin-right:3px;position:relative;top:-0.7px" viewBox="0 0 16 16"><use href="#gear"/></svg><span style="font-size:10.3px;position:relative;top:1.0px">sBookmark3</span></div>
<div class="b gray" style="left:552.2px;top:168.0px;width:173.3px;height:21.3px;"><svg style="width:10px;height:10px;color:#333;flex:none;margin-right:3px;position:relative;top:-0.7px" viewBox="0 0 16 16"><use href="#gear"/></svg><span style="font-size:10.3px;position:relative;top:1.0px">sBookmark32</span></div>
<div class="b gray" style="left:5.2999999999999545px;top:195.0px;width:173.3px;height:21.3px;"><svg style="width:10px;height:10px;color:#333;flex:none;margin-right:3px;position:relative;top:-0.7px" viewBox="0 0 16 16"><use href="#gear"/></svg><span style="font-size:10.3px;position:relative;top:1.0px">sBookmark119</span></div>
<div class="b green" style="left:187.60000000000002px;top:195.0px;width:173.3px;height:21.3px;"><svg style="width:10px;height:10px;color:#050505;flex:none;margin-right:3px;position:relative;top:-0.7px" viewBox="0 0 16 16"><use href="#gear"/></svg><span style="font-size:10.3px;position:relative;top:1.0px">sGetPotionFear</span></div>
<div class="b green" style="left:369.9000000000001px;top:195.0px;width:173.3px;height:21.3px;"><svg style="width:10px;height:10px;color:#050505;flex:none;margin-right:3px;position:relative;top:-0.7px" viewBox="0 0 16 16"><use href="#gear"/></svg><span style="font-size:10.3px;position:relative;top:1.0px">sGetPotionIntuition</span></div>
<div class="b gray" style="left:552.2px;top:195.0px;width:173.3px;height:21.3px;"><svg style="width:10px;height:10px;color:#333;flex:none;margin-right:3px;position:relative;top:-0.7px" viewBox="0 0 16 16"><use href="#gear"/></svg><span style="font-size:10.3px;position:relative;top:1.0px">sBookmark27</span></div>
<div class="b green" style="left:5.2999999999999545px;top:222.0px;width:173.3px;height:21.3px;"><svg style="width:10px;height:10px;color:#050505;flex:none;margin-right:3px;position:relative;top:-0.7px" viewBox="0 0 16 16"><use href="#gear"/></svg><span style="font-size:10.3px;position:relative;top:1.0px">sGetPotionDuality</span></div>
<div class="b gray" style="left:187.60000000000002px;top:222.0px;width:173.3px;height:21.3px;"><svg style="width:10px;height:10px;color:#333;flex:none;margin-right:3px;position:relative;top:-0.7px" viewBox="0 0 16 16"><use href="#gear"/></svg><span style="font-size:10.3px;position:relative;top:1.0px">sBookmark41</span></div>
<div class="b gray" style="left:369.9000000000001px;top:222.0px;width:173.3px;height:21.3px;"><svg style="width:10px;height:10px;color:#333;flex:none;margin-right:3px;position:relative;top:-0.7px" viewBox="0 0 16 16"><use href="#gear"/></svg><span style="font-size:10.3px;position:relative;top:1.0px">sBookmark1</span></div>
<div class="b gray" style="left:552.2px;top:222.0px;width:173.3px;height:21.3px;"><svg style="width:10px;height:10px;color:#333;flex:none;margin-right:3px;position:relative;top:-0.7px" viewBox="0 0 16 16"><use href="#gear"/></svg><span style="font-size:10.3px;position:relative;top:1.0px">sBookmark30</span></div>
<div class="b green" style="left:5.2999999999999545px;top:249.0px;width:173.3px;height:21.3px;"><svg style="width:10px;height:10px;color:#050505;flex:none;margin-right:3px;position:relative;top:-0.7px" viewBox="0 0 16 16"><use href="#gear"/></svg><span style="font-size:10.3px;position:relative;top:1.0px">sGetPotionElusiveness</span></div>
<div class="b gray" style="left:187.60000000000002px;top:249.0px;width:173.3px;height:21.3px;"><svg style="width:10px;height:10px;color:#333;flex:none;margin-right:3px;position:relative;top:-0.7px" viewBox="0 0 16 16"><use href="#gear"/></svg><span style="font-size:10.3px;position:relative;top:1.0px">sBookmark57</span></div>
<div class="b green" style="left:369.9000000000001px;top:249.0px;width:173.3px;height:21.3px;"><svg style="width:10px;height:10px;color:#050505;flex:none;margin-right:3px;position:relative;top:-0.7px" viewBox="0 0 16 16"><use href="#gear"/></svg><span style="font-size:10.3px;position:relative;top:1.0px">sGetPotionMadness</span></div>
<div class="b green" style="left:552.2px;top:249.0px;width:173.3px;height:21.3px;"><svg style="width:10px;height:10px;color:#050505;flex:none;margin-right:3px;position:relative;top:-0.7px" viewBox="0 0 16 16"><use href="#gear"/></svg><span style="font-size:10.3px;position:relative;top:1.0px">sGetPotionRevitalization</span></div>
<div class="b gray" style="left:5.2999999999999545px;top:276.0px;width:173.3px;height:21.3px;"><svg style="width:10px;height:10px;color:#333;flex:none;margin-right:3px;position:relative;top:-0.7px" viewBox="0 0 16 16"><use href="#gear"/></svg><span style="font-size:10.3px;position:relative;top:1.0px">sBookmark16</span></div>
<div class="b gray" style="left:187.60000000000002px;top:276.0px;width:173.3px;height:21.3px;"><svg style="width:10px;height:10px;color:#333;flex:none;margin-right:3px;position:relative;top:-0.7px" viewBox="0 0 16 16"><use href="#gear"/></svg><span style="font-size:10.3px;position:relative;top:1.0px">sBookmark162</span></div>
<div class="b gray" style="left:369.9000000000001px;top:276.0px;width:173.3px;height:21.3px;"><svg style="width:10px;height:10px;color:#333;flex:none;margin-right:3px;position:relative;top:-0.7px" viewBox="0 0 16 16"><use href="#gear"/></svg><span style="font-size:10.3px;position:relative;top:1.0px">sBookmark62</span></div>
<div class="b gray" style="left:552.2px;top:276.0px;width:173.3px;height:21.3px;"><svg style="width:10px;height:10px;color:#333;flex:none;margin-right:3px;position:relative;top:-0.7px" viewBox="0 0 16 16"><use href="#gear"/></svg><span style="font-size:10.3px;position:relative;top:1.0px">sBookmark13</span></div>
<div class="b gray" style="left:5.2999999999999545px;top:303.0px;width:173.3px;height:21.3px;"><svg style="width:10px;height:10px;color:#333;flex:none;margin-right:3px;position:relative;top:-0.7px" viewBox="0 0 16 16"><use href="#gear"/></svg><span style="font-size:10.3px;position:relative;top:1.0px">sBookmark167</span></div>
<div class="b gray" style="left:187.60000000000002px;top:303.0px;width:173.3px;height:21.3px;"><svg style="width:10px;height:10px;color:#333;flex:none;margin-right:3px;position:relative;top:-0.7px" viewBox="0 0 16 16"><use href="#gear"/></svg><span style="font-size:10.3px;position:relative;top:1.0px">sEqualFight</span></div>
<div class="b gray" style="left:369.9000000000001px;top:303.0px;width:173.3px;height:21.3px;"><svg style="width:10px;height:10px;color:#333;flex:none;margin-right:3px;position:relative;top:-0.7px" viewBox="0 0 16 16"><use href="#gear"/></svg><span style="font-size:10.3px;position:relative;top:1.0px">sBookmark42</span></div>
<div class="b gray" style="left:552.2px;top:303.0px;width:173.3px;height:21.3px;"><svg style="width:10px;height:10px;color:#333;flex:none;margin-right:3px;position:relative;top:-0.7px" viewBox="0 0 16 16"><use href="#gear"/></svg><span style="font-size:10.3px;position:relative;top:1.0px">sBookmark2</span></div>
<div class="b gray" style="left:5.2999999999999545px;top:330.0px;width:173.3px;height:21.3px;"><svg style="width:10px;height:10px;color:#333;flex:none;margin-right:3px;position:relative;top:-0.7px" viewBox="0 0 16 16"><use href="#gear"/></svg><span style="font-size:10.3px;position:relative;top:1.0px">sBookmark33</span></div>
<div class="b gray" style="left:187.60000000000002px;top:330.0px;width:173.3px;height:21.3px;"><svg style="width:10px;height:10px;color:#333;flex:none;margin-right:3px;position:relative;top:-0.7px" viewBox="0 0 16 16"><use href="#gear"/></svg><span style="font-size:10.3px;position:relative;top:1.0px">sBookmark5</span></div>
<div class="b gray" style="left:369.9000000000001px;top:330.0px;width:173.3px;height:21.3px;"><svg style="width:10px;height:10px;color:#333;flex:none;margin-right:3px;position:relative;top:-0.7px" viewBox="0 0 16 16"><use href="#gear"/></svg><span style="font-size:10.3px;position:relative;top:1.0px">sBookmark34</span></div>
<div class="b gray" style="left:552.2px;top:330.0px;width:173.3px;height:21.3px;"><svg style="width:10px;height:10px;color:#333;flex:none;margin-right:3px;position:relative;top:-0.7px" viewBox="0 0 16 16"><use href="#gear"/></svg><span style="font-size:10.3px;position:relative;top:1.0px">sBookmark6</span></div>
<div class="b gray" style="left:5.2999999999999545px;top:357.0px;width:173.3px;height:21.3px;"><svg style="width:10px;height:10px;color:#333;flex:none;margin-right:3px;position:relative;top:-0.7px" viewBox="0 0 16 16"><use href="#gear"/></svg><span style="font-size:10.3px;position:relative;top:1.0px">sBookmark37</span></div>
<div class="b gray" style="left:187.60000000000002px;top:357.0px;width:173.3px;height:21.3px;"><svg style="width:10px;height:10px;color:#333;flex:none;margin-right:3px;position:relative;top:-0.7px" viewBox="0 0 16 16"><use href="#gear"/></svg><span style="font-size:10.3px;position:relative;top:1.0px">sBookmark7</span></div>
<div class="b gray" style="left:369.9000000000001px;top:357.0px;width:173.3px;height:21.3px;"><svg style="width:10px;height:10px;color:#333;flex:none;margin-right:3px;position:relative;top:-0.7px" viewBox="0 0 16 16"><use href="#gear"/></svg><span style="font-size:10.3px;position:relative;top:1.0px">sBookmark36</span></div>
<div class="b gray" style="left:552.2px;top:357.0px;width:173.3px;height:21.3px;"><svg style="width:10px;height:10px;color:#333;flex:none;margin-right:3px;position:relative;top:-0.7px" viewBox="0 0 16 16"><use href="#gear"/></svg><span style="font-size:10.3px;position:relative;top:1.0px">sBookmark9</span></div>
<div class="b gray" style="left:5.2999999999999545px;top:384.0px;width:173.3px;height:21.3px;"><svg style="width:10px;height:10px;color:#333;flex:none;margin-right:3px;position:relative;top:-0.7px" viewBox="0 0 16 16"><use href="#gear"/></svg><span style="font-size:10.3px;position:relative;top:1.0px">sBookmark38</span></div>
<div class="b gray" style="left:187.60000000000002px;top:384.0px;width:173.3px;height:21.3px;"><svg style="width:10px;height:10px;color:#333;flex:none;margin-right:3px;position:relative;top:-0.7px" viewBox="0 0 16 16"><use href="#gear"/></svg><span style="font-size:10.3px;position:relative;top:1.0px">sBookmark10</span></div>
<div class="b gray" style="left:369.9000000000001px;top:384.0px;width:173.3px;height:21.3px;"><svg style="width:10px;height:10px;color:#333;flex:none;margin-right:3px;position:relative;top:-0.7px" viewBox="0 0 16 16"><use href="#gear"/></svg><span style="font-size:10.3px;position:relative;top:1.0px">sBookmark11</span></div>
<div class="b gray" style="left:552.2px;top:384.0px;width:173.3px;height:21.3px;"><svg style="width:10px;height:10px;color:#333;flex:none;margin-right:3px;position:relative;top:-0.7px" viewBox="0 0 16 16"><use href="#gear"/></svg><span style="font-size:10.3px;position:relative;top:1.0px">sBookmark14</span></div>
<div class="b gray" style="left:5.2999999999999545px;top:411.0px;width:173.3px;height:21.3px;"><svg style="width:10px;height:10px;color:#333;flex:none;margin-right:3px;position:relative;top:-0.7px" viewBox="0 0 16 16"><use href="#gear"/></svg><span style="font-size:10.3px;position:relative;top:1.0px">sBookmark15</span></div>
<div class="b gray" style="left:187.60000000000002px;top:411.0px;width:173.3px;height:21.3px;"><svg style="width:10px;height:10px;color:#333;flex:none;margin-right:3px;position:relative;top:-0.7px" viewBox="0 0 16 16"><use href="#gear"/></svg><span style="font-size:10.3px;position:relative;top:1.0px">sBookmark17</span></div>
<div class="b gray" style="left:369.9000000000001px;top:411.0px;width:173.3px;height:21.3px;"><svg style="width:10px;height:10px;color:#333;flex:none;margin-right:3px;position:relative;top:-0.7px" viewBox="0 0 16 16"><use href="#gear"/></svg><span style="font-size:10.3px;position:relative;top:1.0px">sBookmark18</span></div>
<div class="b gray" style="left:552.2px;top:411.0px;width:173.3px;height:21.3px;"><svg style="width:10px;height:10px;color:#333;flex:none;margin-right:3px;position:relative;top:-0.7px" viewBox="0 0 16 16"><use href="#gear"/></svg><span style="font-size:10.3px;position:relative;top:1.0px">sBookmark200</span></div>
<div class="b gray" style="left:5.2999999999999545px;top:438.0px;width:173.3px;height:21.3px;"><svg style="width:10px;height:10px;color:#333;flex:none;margin-right:3px;position:relative;top:-0.7px" viewBox="0 0 16 16"><use href="#gear"/></svg><span style="font-size:10.3px;position:relative;top:1.0px">sBookmark19</span></div>
<div class="b gray" style="left:187.60000000000002px;top:438.0px;width:173.3px;height:21.3px;"><svg style="width:10px;height:10px;color:#333;flex:none;margin-right:3px;position:relative;top:-0.7px" viewBox="0 0 16 16"><use href="#gear"/></svg><span style="font-size:10.3px;position:relative;top:1.0px">sBookmark20</span></div>
<div class="b gray" style="left:369.9000000000001px;top:438.0px;width:173.3px;height:21.3px;"><svg style="width:10px;height:10px;color:#333;flex:none;margin-right:3px;position:relative;top:-0.7px" viewBox="0 0 16 16"><use href="#gear"/></svg><span style="font-size:10.3px;position:relative;top:1.0px">sBookmark22</span></div>
<div class="b gray" style="left:552.2px;top:438.0px;width:173.3px;height:21.3px;"><svg style="width:10px;height:10px;color:#333;flex:none;margin-right:3px;position:relative;top:-0.7px" viewBox="0 0 16 16"><use href="#gear"/></svg><span style="font-size:10.3px;position:relative;top:1.0px">sBookmark23</span></div>
<div class="b gray" style="left:5.2999999999999545px;top:465.0px;width:173.3px;height:21.3px;"><svg style="width:10px;height:10px;color:#333;flex:none;margin-right:3px;position:relative;top:-0.7px" viewBox="0 0 16 16"><use href="#gear"/></svg><span style="font-size:10.3px;position:relative;top:1.0px">sBookmark25</span></div>
<div class="b gray" style="left:187.60000000000002px;top:465.0px;width:173.3px;height:21.3px;"><svg style="width:10px;height:10px;color:#333;flex:none;margin-right:3px;position:relative;top:-0.7px" viewBox="0 0 16 16"><use href="#gear"/></svg><span style="font-size:10.3px;position:relative;top:1.0px">sBookmark26</span></div>
<div class="b gray" style="left:369.9000000000001px;top:465.0px;width:173.3px;height:21.3px;"><svg style="width:10px;height:10px;color:#333;flex:none;margin-right:3px;position:relative;top:-0.7px" viewBox="0 0 16 16"><use href="#gear"/></svg><span style="font-size:10.3px;position:relative;top:1.0px">sBookmark28</span></div>
<div class="b gray" style="left:552.2px;top:465.0px;width:173.3px;height:21.3px;"><svg style="width:10px;height:10px;color:#333;flex:none;margin-right:3px;position:relative;top:-0.7px" viewBox="0 0 16 16"><use href="#gear"/></svg><span style="font-size:10.3px;position:relative;top:1.0px">sBookmark29</span></div>
<div class="b gray" style="left:5.2999999999999545px;top:492.0px;width:173.3px;height:21.3px;"><svg style="width:10px;height:10px;color:#333;flex:none;margin-right:3px;position:relative;top:-0.7px" viewBox="0 0 16 16"><use href="#gear"/></svg><span style="font-size:10.3px;position:relative;top:1.0px">sBookmark40</span></div>
<div class="b gray" style="left:187.60000000000002px;top:492.0px;width:173.3px;height:21.3px;"><svg style="width:10px;height:10px;color:#333;flex:none;margin-right:3px;position:relative;top:-0.7px" viewBox="0 0 16 16"><use href="#gear"/></svg><span style="font-size:10.3px;position:relative;top:1.0px">sBookmark31</span></div>
<div class="b gray" style="left:369.9000000000001px;top:492.0px;width:173.3px;height:21.3px;"><svg style="width:10px;height:10px;color:#333;flex:none;margin-right:3px;position:relative;top:-0.7px" viewBox="0 0 16 16"><use href="#gear"/></svg><span style="font-size:10.3px;position:relative;top:1.0px">sBookmark45</span></div>
<div class="b gray" style="left:552.2px;top:492.0px;width:173.3px;height:21.3px;"><svg style="width:10px;height:10px;color:#333;flex:none;margin-right:3px;position:relative;top:-0.7px" viewBox="0 0 16 16"><use href="#gear"/></svg><span style="font-size:10.3px;position:relative;top:1.0px">sBookmark46</span></div>
<div class="b gray" style="left:5.2999999999999545px;top:519.0px;width:173.3px;height:21.3px;box-shadow:0 0 0 2px #e8892b"><svg style="width:10px;height:10px;color:currentColor;flex:none;margin-right:3px;position:relative;top:-0.7px" viewBox="0 0 16 16"><use href="#gear"/></svg><span style="font-size:10.3px;position:relative;top:1.0px">sBookmark47</span></div>
<div class="b gray" style="left:187.60000000000002px;top:519.0px;width:173.3px;height:21.3px;"><svg style="width:10px;height:10px;color:#333;flex:none;margin-right:3px;position:relative;top:-0.7px" viewBox="0 0 16 16"><use href="#gear"/></svg><span style="font-size:10.3px;position:relative;top:1.0px">sBookmark48</span></div>
<div class="b gray" style="left:369.9000000000001px;top:519.0px;width:173.3px;height:21.3px;"><svg style="width:10px;height:10px;color:#333;flex:none;margin-right:3px;position:relative;top:-0.7px" viewBox="0 0 16 16"><use href="#gear"/></svg><span style="font-size:10.3px;position:relative;top:1.0px">sBookmark49</span></div>
<div class="b gray" style="left:552.2px;top:519.0px;width:173.3px;height:21.3px;"><svg style="width:10px;height:10px;color:#333;flex:none;margin-right:3px;position:relative;top:-0.7px" viewBox="0 0 16 16"><use href="#gear"/></svg><span style="font-size:10.3px;position:relative;top:1.0px">sBookmark50</span></div>
<div class="b gray" style="left:5.2999999999999545px;top:546.0px;width:173.3px;height:21.3px;"><svg style="width:10px;height:10px;color:#333;flex:none;margin-right:3px;position:relative;top:-0.7px" viewBox="0 0 16 16"><use href="#gear"/></svg><span style="font-size:10.3px;position:relative;top:1.0px">sBookmark51</span></div>
<div class="b gray" style="left:187.60000000000002px;top:546.0px;width:173.3px;height:21.3px;"><svg style="width:10px;height:10px;color:#333;flex:none;margin-right:3px;position:relative;top:-0.7px" viewBox="0 0 16 16"><use href="#gear"/></svg><span style="font-size:10.3px;position:relative;top:1.0px">sBookmark52</span></div>
<div class="b gray" style="left:369.9000000000001px;top:546.0px;width:173.3px;height:21.3px;"><svg style="width:10px;height:10px;color:#333;flex:none;margin-right:3px;position:relative;top:-0.7px" viewBox="0 0 16 16"><use href="#gear"/></svg><span style="font-size:10.3px;position:relative;top:1.0px">sBookmark53</span></div>
<div class="b gray" style="left:552.2px;top:546.0px;width:173.3px;height:21.3px;"><svg style="width:10px;height:10px;color:#333;flex:none;margin-right:3px;position:relative;top:-0.7px" viewBox="0 0 16 16"><use href="#gear"/></svg><span style="font-size:10.3px;position:relative;top:1.0px">sBookmark54</span></div>
<div class="b gray" style="left:5.2999999999999545px;top:573.0px;width:173.3px;height:21.3px;"><svg style="width:10px;height:10px;color:#333;flex:none;margin-right:3px;position:relative;top:-0.7px" viewBox="0 0 16 16"><use href="#gear"/></svg><span style="font-size:10.3px;position:relative;top:1.0px">sBookmark55</span></div>
<div class="b gray" style="left:187.60000000000002px;top:573.0px;width:173.3px;height:21.3px;"><svg style="width:10px;height:10px;color:#333;flex:none;margin-right:3px;position:relative;top:-0.7px" viewBox="0 0 16 16"><use href="#gear"/></svg><span style="font-size:10.3px;position:relative;top:1.0px">sBookmark56</span></div>
<div class="b gray" style="left:369.9000000000001px;top:573.0px;width:173.3px;height:21.3px;"><svg style="width:10px;height:10px;color:#333;flex:none;margin-right:3px;position:relative;top:-0.7px" viewBox="0 0 16 16"><use href="#gear"/></svg><span style="font-size:10.3px;position:relative;top:1.0px">sNegativeFight</span></div>
<div class="b gray" style="left:552.2px;top:573.0px;width:173.3px;height:21.3px;"><svg style="width:10px;height:10px;color:#333;flex:none;margin-right:3px;position:relative;top:-0.7px" viewBox="0 0 16 16"><use href="#gear"/></svg><span style="font-size:10.3px;position:relative;top:1.0px">sBookmark58</span></div>
<div class="b gray" style="left:5.2999999999999545px;top:600.0px;width:173.3px;height:21.3px;"><svg style="width:10px;height:10px;color:#333;flex:none;margin-right:3px;position:relative;top:-0.7px" viewBox="0 0 16 16"><use href="#gear"/></svg><span style="font-size:10.3px;position:relative;top:1.0px">sBookmark59</span></div>
<div class="b gray" style="left:187.60000000000002px;top:600.0px;width:173.3px;height:21.3px;"><svg style="width:10px;height:10px;color:#333;flex:none;margin-right:3px;position:relative;top:-0.7px" viewBox="0 0 16 16"><use href="#gear"/></svg><span style="font-size:10.3px;position:relative;top:1.0px">sBookmark60</span></div>
<div class="b gray" style="left:369.9000000000001px;top:600.0px;width:173.3px;height:21.3px;"><svg style="width:10px;height:10px;color:#333;flex:none;margin-right:3px;position:relative;top:-0.7px" viewBox="0 0 16 16"><use href="#gear"/></svg><span style="font-size:10.3px;position:relative;top:1.0px">sBookmark61</span></div>
<div class="b gray" style="left:552.2px;top:600.0px;width:173.3px;height:21.3px;"><svg style="width:10px;height:10px;color:#333;flex:none;margin-right:3px;position:relative;top:-0.7px" viewBox="0 0 16 16"><use href="#gear"/></svg><span style="font-size:10.3px;position:relative;top:1.0px">sBookmark63</span></div>
<div class="b gray" style="left:5.2999999999999545px;top:627.0px;width:173.3px;height:21.3px;"><svg style="width:10px;height:10px;color:#333;flex:none;margin-right:3px;position:relative;top:-0.7px" viewBox="0 0 16 16"><use href="#gear"/></svg><span style="font-size:10.3px;position:relative;top:1.0px">sBookmark64</span></div>
<div class="b gray" style="left:187.60000000000002px;top:627.0px;width:173.3px;height:21.3px;"><svg style="width:10px;height:10px;color:#333;flex:none;margin-right:3px;position:relative;top:-0.7px" viewBox="0 0 16 16"><use href="#gear"/></svg><span style="font-size:10.3px;position:relative;top:1.0px">sBookmark65</span></div>
<div class="b gray" style="left:369.9000000000001px;top:627.0px;width:173.3px;height:21.3px;"><svg style="width:10px;height:10px;color:#333;flex:none;margin-right:3px;position:relative;top:-0.7px" viewBox="0 0 16 16"><use href="#gear"/></svg><span style="font-size:10.3px;position:relative;top:1.0px">sBookmark67</span></div>
<div class="b gray" style="left:552.2px;top:627.0px;width:173.3px;height:21.3px;"><svg style="width:10px;height:10px;color:#333;flex:none;margin-right:3px;position:relative;top:-0.7px" viewBox="0 0 16 16"><use href="#gear"/></svg><span style="font-size:10.3px;position:relative;top:1.0px">sBookmark68</span></div>
</div>
<div class="sb" style="left:1413px;top:71.5px;width:9.6px;height:634.5px;"></div>
<div style="left:1413px;top:324px;width:9.6px;height:382px;background:#5f6e79;border-radius:0 0 2px 2px"></div>
<div style="left:673px;top:714px;width:757px;height:1px;background:#3e4c57"></div>
<div class="hdr" style="left:673px;top:715px;width:757px;height:21px;"></div>
<svg class="i" style="left:679px;top:722px;width:12.5px;height:12px;color:#8ccbea;" viewBox="0 0 16 16"><use href="#bookl"/></svg>
<div class="t" style="left:695.00px;top:721.94px;font-size:11.6px;color:#8ec3de;">Property Editor</div>
<svg class="i" style="left:1412.5px;top:722px;width:9.5px;height:9.5px;color:#fff;" viewBox="0 0 16 16"><use href="#close"/></svg>
<div class="b blue" style="left:680px;top:743px;width:35px;height:18.4px;background:linear-gradient(#21506e,#1b435e 50%,#173a52);box-shadow:0 0 0 1px #232d34"><svg style="width:10.5px;height:10.5px;color:currentColor;flex:none;margin-right:2px;position:relative;top:-0.5px" viewBox="0 0 16 16"><use href="#plusc"/></svg><svg style="width:10.5px;height:10.5px;color:currentColor;flex:none;margin-right:2px;position:relative;top:-0.5px" viewBox="0 0 16 16"><use href="#bookl"/></svg></div>
<svg class="i" style="left:718px;top:747px;width:8px;height:10px;color:#eee;" viewBox="0 0 16 16"><use href="#vdots"/></svg>
<svg class="i" style="left:736.3px;top:746.5px;width:11px;height:11px;color:#fff;" viewBox="0 0 16 16"><use href="#search"/></svg>
<div class="inp" style="left:755.6px;top:744px;width:668px;height:18.4px;"></div>
<div style="left:681px;top:767px;width:731px;height:305px;background:#151c21"></div>
<div style="left:681px;top:767px;width:731px;height:305px;overflow:hidden">
<div class="b prop" style="left:5.2999999999999545px;top:5.7999999999999545px;width:173.3px;height:21.2px;"><svg style="width:11px;height:11px;color:#111;flex:none;margin-right:3px;position:relative;top:0.5px" viewBox="0 0 16 16"><use href="#book"/></svg><span style="font-size:10.3px;position:relative;top:1.5px">Fight_172</span></div>
<div class="b prop" style="left:187.60000000000002px;top:5.7999999999999545px;width:173.3px;height:21.2px;"><svg style="width:11px;height:11px;color:#111;flex:none;margin-right:3px;position:relative;top:0.5px" viewBox="0 0 16 16"><use href="#book"/></svg><span style="font-size:10.3px;position:relative;top:1.5px">Fight_FirstBat30</span></div>
<div class="b prop" style="left:369.9000000000001px;top:5.7999999999999545px;width:173.3px;height:21.2px;"><svg style="width:11px;height:11px;color:#111;flex:none;margin-right:3px;position:relative;top:0.5px" viewBox="0 0 16 16"><use href="#book"/></svg><span style="font-size:10.3px;position:relative;top:1.5px">Potion_TruthSeeking</span></div>
<div class="b prop" style="left:552.2px;top:5.7999999999999545px;width:173.3px;height:21.2px;"><svg style="width:11px;height:11px;color:#111;flex:none;margin-right:3px;position:relative;top:0.5px" viewBox="0 0 16 16"><use href="#book"/></svg><span style="font-size:10.3px;position:relative;top:1.5px">Fight_154</span></div>
<div class="b prop" style="left:5.2999999999999545px;top:32.799999999999955px;width:173.3px;height:21.2px;"><svg style="width:11px;height:11px;color:#111;flex:none;margin-right:3px;position:relative;top:0.5px" viewBox="0 0 16 16"><use href="#book"/></svg><span style="font-size:10.3px;position:relative;top:1.5px">Potion_Power</span></div>
<div class="b prop" style="left:187.60000000000002px;top:32.799999999999955px;width:173.3px;height:21.2px;"><svg style="width:11px;height:11px;color:#111;flex:none;margin-right:3px;position:relative;top:0.5px" viewBox="0 0 16 16"><use href="#book"/></svg><span style="font-size:10.3px;position:relative;top:1.5px">Fight_106</span></div>
<div class="b prop" style="left:369.9000000000001px;top:32.799999999999955px;width:173.3px;height:21.2px;"><svg style="width:11px;height:11px;color:#111;flex:none;margin-right:3px;position:relative;top:0.5px" viewBox="0 0 16 16"><use href="#book"/></svg><span style="font-size:10.3px;position:relative;top:1.5px">Potion_Total</span></div>
<div class="b prop" style="left:552.2px;top:32.799999999999955px;width:173.3px;height:21.2px;"><svg style="width:11px;height:11px;color:#111;flex:none;margin-right:3px;position:relative;top:0.5px" viewBox="0 0 16 16"><use href="#book"/></svg><span style="font-size:10.3px;position:relative;top:1.5px">Item_AmuletOfStone</span></div>
<div class="b prop" style="left:5.2999999999999545px;top:59.799999999999955px;width:173.3px;height:21.2px;"><svg style="width:11px;height:11px;color:#111;flex:none;margin-right:3px;position:relative;top:0.5px" viewBox="0 0 16 16"><use href="#book"/></svg><span style="font-size:10.3px;position:relative;top:1.5px">Potion_Searching</span></div>
<div class="b prop" style="left:187.60000000000002px;top:59.799999999999955px;width:173.3px;height:21.2px;"><svg style="width:11px;height:11px;color:#111;flex:none;margin-right:3px;position:relative;top:0.5px" viewBox="0 0 16 16"><use href="#book"/></svg><span style="font-size:10.3px;position:relative;top:1.5px">Potion_Transparency</span></div>
<div class="b prop" style="left:369.9000000000001px;top:59.799999999999955px;width:173.3px;height:21.2px;"><svg style="width:11px;height:11px;color:#111;flex:none;margin-right:3px;position:relative;top:0.5px" viewBox="0 0 16 16"><use href="#book"/></svg><span style="font-size:10.3px;position:relative;top:1.5px">Potion_Fear</span></div>
<div class="b prop" style="left:552.2px;top:59.799999999999955px;width:173.3px;height:21.2px;"><svg style="width:11px;height:11px;color:#111;flex:none;margin-right:3px;position:relative;top:0.5px" viewBox="0 0 16 16"><use href="#book"/></svg><span style="font-size:10.3px;position:relative;top:1.5px">Potion_Invincibility</span></div>
<div class="b prop" style="left:5.2999999999999545px;top:86.79999999999995px;width:173.3px;height:21.2px;"><svg style="width:11px;height:11px;color:#111;flex:none;margin-right:3px;position:relative;top:0.5px" viewBox="0 0 16 16"><use href="#book"/></svg><span style="font-size:10.3px;position:relative;top:1.5px">Fight_82</span></div>
<div class="b prop" style="left:187.60000000000002px;top:86.79999999999995px;width:173.3px;height:21.2px;"><svg style="width:11px;height:11px;color:#111;flex:none;margin-right:3px;position:relative;top:0.5px" viewBox="0 0 16 16"><use href="#book"/></svg><span style="font-size:10.3px;position:relative;top:1.5px">Potion_Flying</span></div>
<div class="b prop" style="left:369.9000000000001px;top:86.79999999999995px;width:173.3px;height:21.2px;"><svg style="width:11px;height:11px;color:#111;flex:none;margin-right:3px;position:relative;top:0.5px" viewBox="0 0 16 16"><use href="#book"/></svg><span style="font-size:10.3px;position:relative;top:1.5px">Potion_Calm</span></div>
<div class="b prop" style="left:552.2px;top:86.79999999999995px;width:173.3px;height:21.2px;"><svg style="width:11px;height:11px;color:#111;flex:none;margin-right:3px;position:relative;top:0.5px" viewBox="0 0 16 16"><use href="#book"/></svg><span style="font-size:10.3px;position:relative;top:1.5px">Potion_Intuition</span></div>
<div class="b prop" style="left:5.2999999999999545px;top:113.79999999999995px;width:173.3px;height:21.2px;"><svg style="width:11px;height:11px;color:#111;flex:none;margin-right:3px;position:relative;top:0.5px" viewBox="0 0 16 16"><use href="#book"/></svg><span style="font-size:10.3px;position:relative;top:1.5px">Potion_Duality</span></div>
<div class="b prop" style="left:187.60000000000002px;top:113.79999999999995px;width:173.3px;height:21.2px;"><svg style="width:11px;height:11px;color:#111;flex:none;margin-right:3px;position:relative;top:0.5px" viewBox="0 0 16 16"><use href="#book"/></svg><span style="font-size:10.3px;position:relative;top:1.5px">Score_Strength</span></div>
<div class="b prop" style="left:369.9000000000001px;top:113.79999999999995px;width:173.3px;height:21.2px;"><svg style="width:11px;height:11px;color:#111;flex:none;margin-right:3px;position:relative;top:0.5px" viewBox="0 0 16 16"><use href="#book"/></svg><span style="font-size:10.3px;position:relative;top:1.5px">Fight_124</span></div>
<div class="b prop" style="left:552.2px;top:113.79999999999995px;width:173.3px;height:21.2px;"><svg style="width:11px;height:11px;color:#111;flex:none;margin-right:3px;position:relative;top:0.5px" viewBox="0 0 16 16"><use href="#book"/></svg><span style="font-size:10.3px;position:relative;top:1.5px">Potion_Elusiveness</span></div>
<div class="b prop" style="left:5.2999999999999545px;top:140.79999999999995px;width:173.3px;height:21.2px;"><svg style="width:11px;height:11px;color:#111;flex:none;margin-right:3px;position:relative;top:0.5px" viewBox="0 0 16 16"><use href="#book"/></svg><span style="font-size:10.3px;position:relative;top:1.5px">Fight_15</span></div>
<div class="b prop" style="left:187.60000000000002px;top:140.79999999999995px;width:173.3px;height:21.2px;"><svg style="width:11px;height:11px;color:#111;flex:none;margin-right:3px;position:relative;top:0.5px" viewBox="0 0 16 16"><use href="#book"/></svg><span style="font-size:10.3px;position:relative;top:1.5px">Potion_Madness</span></div>
<div class="b prop" style="left:369.9000000000001px;top:140.79999999999995px;width:173.3px;height:21.2px;"><svg style="width:11px;height:11px;color:#111;flex:none;margin-right:3px;position:relative;top:0.5px" viewBox="0 0 16 16"><use href="#book"/></svg><span style="font-size:10.3px;position:relative;top:1.5px">Potion_Revitalization</span></div>
<div class="b prop" style="left:552.2px;top:140.79999999999995px;width:173.3px;height:21.2px;"><svg style="width:11px;height:11px;color:#111;flex:none;margin-right:3px;position:relative;top:0.5px" viewBox="0 0 16 16"><use href="#book"/></svg><span style="font-size:10.3px;position:relative;top:1.5px">Effect_Invincibility</span></div>
<div class="b prop" style="left:5.2999999999999545px;top:167.79999999999995px;width:173.3px;height:21.2px;"><svg style="width:11px;height:11px;color:#111;flex:none;margin-right:3px;position:relative;top:0.5px" viewBox="0 0 16 16"><use href="#book"/></svg><span style="font-size:10.3px;position:relative;top:1.5px">Score_Dexterity</span></div>
<div class="b prop" style="left:187.60000000000002px;top:167.79999999999995px;width:173.3px;height:21.2px;"><svg style="width:11px;height:11px;color:#111;flex:none;margin-right:3px;position:relative;top:0.5px" viewBox="0 0 16 16"><use href="#book"/></svg><span style="font-size:10.3px;position:relative;top:1.5px">Item_CrystalKey</span></div>
<div class="b prop" style="left:369.9000000000001px;top:167.79999999999995px;width:173.3px;height:21.2px;"><svg style="width:11px;height:11px;color:#111;flex:none;margin-right:3px;position:relative;top:0.5px" viewBox="0 0 16 16"><use href="#book"/></svg><span style="font-size:10.3px;position:relative;top:1.5px">Score_Courage</span></div>
<div class="b prop" style="left:552.2px;top:167.79999999999995px;width:173.3px;height:21.2px;"><svg style="width:11px;height:11px;color:#111;flex:none;margin-right:3px;position:relative;top:0.5px" viewBox="0 0 16 16"><use href="#book"/></svg><span style="font-size:10.3px;position:relative;top:1.5px">Item_SilverLance</span></div>
<div class="b prop" style="left:5.2999999999999545px;top:194.79999999999995px;width:173.3px;height:21.2px;"><svg style="width:11px;height:11px;color:#111;flex:none;margin-right:3px;position:relative;top:0.5px" viewBox="0 0 16 16"><use href="#book"/></svg><span style="font-size:10.3px;position:relative;top:1.5px">Creature_Dexterity</span></div>
<div class="b prop" style="left:187.60000000000002px;top:194.79999999999995px;width:173.3px;height:21.2px;"><svg style="width:11px;height:11px;color:#111;flex:none;margin-right:3px;position:relative;top:0.5px" viewBox="0 0 16 16"><use href="#book"/></svg><span style="font-size:10.3px;position:relative;top:1.5px">Creature_Strength</span></div>
<div class="b prop" style="left:369.9000000000001px;top:194.79999999999995px;width:173.3px;height:21.2px;"><svg style="width:11px;height:11px;color:#111;flex:none;margin-right:3px;position:relative;top:0.5px" viewBox="0 0 16 16"><use href="#book"/></svg><span style="font-size:10.3px;position:relative;top:1.5px">Effect_Elusiveness</span></div>
<div class="b prop" style="left:552.2px;top:194.79999999999995px;width:173.3px;height:21.2px;"><svg style="width:11px;height:11px;color:#111;flex:none;margin-right:3px;position:relative;top:0.5px" viewBox="0 0 16 16"><use href="#book"/></svg><span style="font-size:10.3px;position:relative;top:1.5px">Score_FightingPower</span></div>
<div class="b prop" style="left:5.2999999999999545px;top:221.79999999999995px;width:173.3px;height:21.2px;"><svg style="width:11px;height:11px;color:#111;flex:none;margin-right:3px;position:relative;top:0.5px" viewBox="0 0 16 16"><use href="#book"/></svg><span style="font-size:10.3px;position:relative;top:1.5px">Item_Rations</span></div>
<div class="b prop" style="left:187.60000000000002px;top:221.79999999999995px;width:173.3px;height:21.2px;"><svg style="width:11px;height:11px;color:#111;flex:none;margin-right:3px;position:relative;top:0.5px" viewBox="0 0 16 16"><use href="#book"/></svg><span style="font-size:10.3px;position:relative;top:1.5px">Fight_92</span></div>
<div class="b prop" style="left:369.9000000000001px;top:221.79999999999995px;width:173.3px;height:21.2px;"><svg style="width:11px;height:11px;color:#111;flex:none;margin-right:3px;position:relative;top:0.5px" viewBox="0 0 16 16"><use href="#book"/></svg><span style="font-size:10.3px;position:relative;top:1.5px">Creature_FightingPower</span></div>
<div class="b prop" style="left:552.2px;top:221.79999999999995px;width:173.3px;height:21.2px;"><svg style="width:11px;height:11px;color:#111;flex:none;margin-right:3px;position:relative;top:0.5px" viewBox="0 0 16 16"><use href="#book"/></svg><span style="font-size:10.3px;position:relative;top:1.5px">Fight_18</span></div>
<div class="b prop" style="left:5.2999999999999545px;top:248.79999999999995px;width:173.3px;height:21.2px;"><svg style="width:11px;height:11px;color:#111;flex:none;margin-right:3px;position:relative;top:0.5px" viewBox="0 0 16 16"><use href="#book"/></svg><span style="font-size:10.3px;position:relative;top:1.5px">Fight_113</span></div>
<div class="b prop" style="left:187.60000000000002px;top:248.79999999999995px;width:173.3px;height:21.2px;"><svg style="width:11px;height:11px;color:#111;flex:none;margin-right:3px;position:relative;top:0.5px" viewBox="0 0 16 16"><use href="#book"/></svg><span style="font-size:10.3px;position:relative;top:1.5px">Item_SilverKey</span></div>
<div class="b prop" style="left:369.9000000000001px;top:248.79999999999995px;width:173.3px;height:21.2px;"><svg style="width:11px;height:11px;color:#111;flex:none;margin-right:3px;position:relative;top:0.5px" viewBox="0 0 16 16"><use href="#book"/></svg><span style="font-size:10.3px;position:relative;top:1.5px">Fight_85</span></div>
<div class="b prop" style="left:552.2px;top:248.79999999999995px;width:173.3px;height:21.2px;"><svg style="width:11px;height:11px;color:#111;flex:none;margin-right:3px;position:relative;top:0.5px" viewBox="0 0 16 16"><use href="#book"/></svg><span style="font-size:10.3px;position:relative;top:1.5px">Fight_26</span></div>
<div class="b prop" style="left:5.2999999999999545px;top:275.79999999999995px;width:173.3px;height:21.2px;"><svg style="width:11px;height:11px;color:#111;flex:none;margin-right:3px;position:relative;top:0.5px" viewBox="0 0 16 16"><use href="#book"/></svg><span style="font-size:10.3px;position:relative;top:1.5px">Fight_29</span></div>
<div class="b prop" style="left:187.60000000000002px;top:275.79999999999995px;width:173.3px;height:21.2px;"><svg style="width:11px;height:11px;color:#111;flex:none;margin-right:3px;position:relative;top:0.5px" viewBox="0 0 16 16"><use href="#book"/></svg><span style="font-size:10.3px;position:relative;top:1.5px">Effect_SilverLance</span></div>
<div class="b prop" style="left:369.9000000000001px;top:275.79999999999995px;width:173.3px;height:21.2px;"><svg style="width:11px;height:11px;color:#111;flex:none;margin-right:3px;position:relative;top:0.5px" viewBox="0 0 16 16"><use href="#book"/></svg><span style="font-size:10.3px;position:relative;top:1.5px">Fight_141</span></div>
<div class="b prop" style="left:552.2px;top:275.79999999999995px;width:173.3px;height:21.2px;"><svg style="width:11px;height:11px;color:#111;flex:none;margin-right:3px;position:relative;top:0.5px" viewBox="0 0 16 16"><use href="#book"/></svg><span style="font-size:10.3px;position:relative;top:1.5px">Fight_SecondBat30</span></div>
<div class="b prop" style="left:5.2999999999999545px;top:302.79999999999995px;width:173.3px;height:21.2px;"></div>
<div class="b prop" style="left:187.60000000000002px;top:302.79999999999995px;width:173.3px;height:21.2px;"></div>
<div class="b prop" style="left:369.9000000000001px;top:302.79999999999995px;width:173.3px;height:21.2px;"></div>
<div class="b prop" style="left:552.2px;top:302.79999999999995px;width:173.3px;height:21.2px;"></div>
</div>
<div class="sb" style="left:1413px;top:767.3px;width:9.6px;height:305px;"></div>
<div style="left:1413px;top:1008.6px;width:9.6px;height:63.4px;background:#5f6e79;border-radius:0 0 2px 2px"></div>
<div style="left:673px;top:1072px;width:757px;height:7px;background:#1d2830"></div>
<div style="left:1429.8px;top:19px;width:1.9px;height:1060px;background:#3e4c57"></div>
<div class="hdr" style="left:1432px;top:19px;width:488px;height:20.5px;"></div>
<svg class="i" style="left:1437.5px;top:24.2px;width:11.7px;height:11.7px;color:#8ccbea;" viewBox="0 0 16 16"><use href="#clock"/></svg>
<div class="t" style="left:1452.50px;top:25.94px;font-size:11.6px;color:#8ec3de;">Time Controller</div>
<svg class="i" style="left:1904px;top:26px;width:9.5px;height:9.5px;color:#fff;" viewBox="0 0 16 16"><use href="#close"/></svg>
<div class="b orange" style="left:1438px;top:48.5px;width:234px;height:36.5px;box-shadow:0 0 0 1px #2a2a26;color:#fff0dc"><svg style="width:11.5px;height:11.5px;color:#fff0dc;flex:none;margin-right:3px;position:relative;top:-0.3px" viewBox="0 0 16 16"><use href="#clock"/></svg><span style="font-size:10.3px;position:relative;top:0.7px">Time Controls</span></div>
<div class="b blue" style="left:1680px;top:48.9px;width:233.6px;height:35.6px;"><svg style="width:12px;height:12px;color:currentColor;flex:none;margin-right:3px;position:relative;top:0.5px" viewBox="0 0 16 16"><use href="#leaf"/></svg><span style="font-size:10.3px;position:relative;top:1.5px">Branches Browser</span></div>
<div style="left:1436px;top:91.5px;width:478px;height:1.5px;background:#33414c"></div>
<div class="b blue" style="left:1438px;top:97.8px;width:153px;height:18.6px;"><svg style="width:13px;height:13px;color:currentColor;flex:none;margin-right:2px;position:relative;top:-0.5px" viewBox="0 0 16 16"><use href="#retweet"/></svg><span style="font-size:10.3px;position:relative;top:1.0px">Reset</span></div>
<div class="b blue" style="left:1599px;top:97.8px;width:153.7px;height:18.6px;"><svg style="width:10px;height:10px;color:currentColor;flex:none;margin-right:3px;position:relative;top:0.0px" viewBox="0 0 16 16"><use href="#stepb"/></svg><span style="font-size:10.3px;position:relative;top:1.0px">Rewind</span></div>
<div class="b blue" style="left:1760px;top:97.8px;width:153.6px;height:18.6px;"><svg style="width:10px;height:10px;color:currentColor;flex:none;margin-right:3px;position:relative;top:0.0px" viewBox="0 0 16 16"><use href="#stepf"/></svg><span style="font-size:10.3px;position:relative;top:1.0px">Advance</span></div>
<svg class="i" style="left:1437.5px;top:122.5px;width:11px;height:11px;color:#eee;" viewBox="0 0 16 16"><use href="#hourglass"/></svg>
<div class="t" style="left:1451.00px;top:124.79px;font-size:10.3px;color:#e4e4e4;">Time</div>
<div style="left:1481px;top:124.5px;width:433px;height:17.1px;background:#121a1e;border-radius:3px"></div>
<div style="left:1769px;top:124.6px;width:143px;height:16.2px;background:#30373a;border-radius:4px;box-shadow:inset 0 1px 0 #3a4246"></div>
<div class="t" style="left:1693.00px;top:129.09px;font-size:10.3px;color:#e8e8e8;">2</div>
<div style="left:1436px;top:146.7px;width:478px;height:1.2px;background:#384650"></div>
<div class="b blue" style="left:1438px;top:154px;width:234px;height:18px;"><svg style="width:13px;height:13px;color:currentColor;flex:none;margin-right:2px;position:relative;top:-0.5px" viewBox="0 0 16 16"><use href="#retweet"/></svg><span style="font-size:10.3px;position:relative;top:1.0px">Reset Branch</span></div>
<div class="b blue" style="left:1680px;top:154px;width:233.6px;height:18px;"><svg style="width:10px;height:10px;color:currentColor;flex:none;margin-right:3px;position:relative;top:0.0px" viewBox="0 0 16 16"><use href="#floppy"/></svg><span style="font-size:10.3px;position:relative;top:1.0px">Save</span></div>
<svg class="i" style="left:1443px;top:181px;width:12.5px;height:12px;color:#f2f2f2;" viewBox="0 0 16 16"><use href="#random"/></svg>
<div class="t" style="left:1458.00px;top:184.29px;font-size:10.3px;color:#e4e4e4;">Seed</div>
<div class="inp" style="left:1489px;top:180px;width:315px;height:17px;"></div>
<div class="t" style="left:1494.00px;top:184.29px;font-size:10.3px;color:#e8e8e8;">0</div>
<div class="b blue" style="left:1810.5px;top:179px;width:26px;height:19px;background:#1d3344"><svg style="width:11px;height:11px;color:#8fa3b2;flex:none;margin-right:3px;position:relative;top:0.0px" viewBox="0 0 16 16"><use href="#floppy"/></svg></div>
<div class="b blue" style="left:1842.4px;top:179px;width:23px;height:19px;background:#1d3344"><svg style="width:9px;height:9px;color:#8fa3b2;flex:none;margin-right:3px;position:relative;top:0.0px" viewBox="0 0 16 16"><use href="#close"/></svg></div>
<div style="left:1432px;top:543px;width:488px;height:1px;background:#3e4c57"></div>
<div class="hdr" style="left:1432px;top:544px;width:488px;height:21px;"></div>
<svg class="i" style="left:1436px;top:548.5px;width:9px;height:14px;color:#8ccbea;" viewBox="0 0 16 16"><use href="#bolt"/></svg>
<div class="t" style="left:1447.50px;top:549.54px;font-size:11.6px;color:#8ec3de;">Read in Editor</div>
<svg class="i" style="left:1904px;top:551px;width:9.5px;height:9.5px;color:#fff;" viewBox="0 0 16 16"><use href="#close"/></svg>
<div style="left:1438px;top:565px;width:467px;height:40px;overflow:hidden;background:#151c21">
<div class="t" style="left:17.00px;top:-4.21px;font-size:10.3px;color:#e6e6e6;">You leave him in his cell with his dreamsand his fears, and walk back into</div>
<div class="t" style="left:5.50px;top:13.29px;font-size:10.3px;color:#e6e6e6;">your own room. You will have to leave alone.</div>
<div class="t" style="left:16.00px;top:29.79px;font-size:10.3px;color:#e6e6e6;">The idea in your mind becomes more exciting ? to journey to Darkblood.</div>
</div>
<div style="left:1895.7px;top:566.5px;width:9.3px;height:38.5px;background:#6f7a80;border-radius:2px"></div>
<div style="left:1911px;top:566px;width:9px;height:513px;background:#5f6e79"></div>
<div style="left:1913.5px;top:727px;width:5px;height:352px;background:#2f3a43;border-radius:2px"></div>
<div style="left:1438px;top:629.7px;width:467px;height:18.2px;background:linear-gradient(#235878,#1d4b68 50%,#193f57);border-radius:3px;box-shadow:0 0 0 1px #1a2630, 0 2.6px 0 #2a3841"></div>
<div class="t" style="left:1460.00px;top:635.79px;font-size:10.3px;color:#eef2f5;">Flying: You will float over any natural obstacle.</div>
<div style="left:1438px;top:653.8000000000001px;width:467px;height:56.99999999999999px;background:linear-gradient(#235878,#1d4b68 50%,#193f57);border-radius:3px;box-shadow:0 0 0 1px #1a2630, 0 2.6px 0 #2a3841"></div>
<div class="t" style="left:1460.00px;top:659.89px;font-size:10.3px;color:#eef2f5;">Invincibility: Not quite as powerful as it sounds! It will totally protect you against any creature only</div>
<div class="t" style="left:1460.00px;top:671.79px;font-size:10.3px;color:#eef2f5;">for the first three rounds of fighting (See Rules for Fighting). This means you will lose no Strength</div>
<div class="t" style="left:1460.00px;top:683.69px;font-size:10.3px;color:#eef2f5;">points for the first three times you are wounded in that battle.</div>
<div style="left:1438px;top:716.7px;width:467px;height:18.2px;background:linear-gradient(#235878,#1d4b68 50%,#193f57);border-radius:3px;box-shadow:0 0 0 1px #1a2630, 0 2.6px 0 #2a3841"></div>
<div class="t" style="left:1460.00px;top:722.79px;font-size:10.3px;color:#eef2f5;">Truth-seeking: You will know when someone is lying to you.</div>
<div style="left:1438px;top:740.8000000000001px;width:467px;height:18.2px;background:linear-gradient(#235878,#1d4b68 50%,#193f57);border-radius:3px;box-shadow:0 0 0 1px #1a2630, 0 2.6px 0 #2a3841"></div>
<div class="t" style="left:1460.00px;top:746.89px;font-size:10.3px;color:#eef2f5;">Searching: Will take you in the right direction when you are faced with a choice.</div>
<div style="left:1438px;top:764.9000000000001px;width:467px;height:18.2px;background:linear-gradient(#235878,#1d4b68 50%,#193f57);border-radius:3px;box-shadow:0 0 0 1px #1a2630, 0 2.6px 0 #2a3841"></div>
<div class="t" style="left:1460.00px;top:770.99px;font-size:10.3px;color:#eef2f5;">Transparency: Enables you to disappear, like a ghost.</div>
<div style="left:1438px;top:789.0000000000001px;width:467px;height:37.599999999999994px;background:linear-gradient(#235878,#1d4b68 50%,#193f57);border-radius:3px;box-shadow:0 0 0 1px #1a2630, 0 2.6px 0 #2a3841"></div>
<div class="t" style="left:1460.00px;top:795.09px;font-size:10.3px;color:#eef2f5;">Power: Each blow in any one battle will cause four Strength points to be lost by the enemy for the</div>
<div class="t" style="left:1460.00px;top:806.99px;font-size:10.3px;color:#eef2f5;">first two rounds of fighting (See Rules for Fighting).</div>
<div style="left:1438px;top:832.5000000000001px;width:467px;height:18.2px;background:linear-gradient(#235878,#1d4b68 50%,#193f57);border-radius:3px;box-shadow:0 0 0 1px #1a2630, 0 2.6px 0 #2a3841"></div>
<div class="t" style="left:1460.00px;top:838.59px;font-size:10.3px;color:#eef2f5;">Calm: Will restore your Courage points to their Initial level.</div>
<div style="left:1438px;top:856.6000000000001px;width:467px;height:37.599999999999994px;background:linear-gradient(#235878,#1d4b68 50%,#193f57);border-radius:3px;box-shadow:0 0 0 1px #1a2630, 0 2.6px 0 #2a3841"></div>
<div class="t" style="left:1460.00px;top:862.69px;font-size:10.3px;color:#eef2f5;">Fear: Any enemy will lose three Dexterity points for that particular battle (See Rules for Fighting).</div>
<div style="left:1438px;top:900.1000000000001px;width:467px;height:18.2px;background:linear-gradient(#235878,#1d4b68 50%,#193f57);border-radius:3px;box-shadow:0 0 0 1px #1a2630, 0 2.6px 0 #2a3841"></div>
<div class="t" style="left:1460.00px;top:906.19px;font-size:10.3px;color:#eef2f5;">Intuition: You will know the answer to a question, without necessarily knowing why.</div>
<div style="left:1438px;top:924.2000000000002px;width:467px;height:56.99999999999999px;background:linear-gradient(#235878,#1d4b68 50%,#193f57);border-radius:3px;box-shadow:0 0 0 1px #1a2630, 0 2.6px 0 #2a3841"></div>
<div class="t" style="left:1460.00px;top:930.29px;font-size:10.3px;color:#eef2f5;">Duality: An enemy will actually fight someone who only &nbsp;appears &nbsp;to be you. The battle proceeds in</div>
<div class="t" style="left:1460.00px;top:942.19px;font-size:10.3px;color:#eef2f5;">the normal way (See Rules for Fighting), but only if the creature wins in that battle will the real you</div>
<div class="t" style="left:1460.00px;top:954.09px;font-size:10.3px;color:#eef2f5;">have to fight him.</div>
<div style="left:1438px;top:987.1000000000001px;width:467px;height:37.599999999999994px;background:linear-gradient(#235878,#1d4b68 50%,#193f57);border-radius:3px;box-shadow:0 0 0 1px #1a2630, 0 2.6px 0 #2a3841"></div>
<div class="t" style="left:1460.00px;top:993.19px;font-size:10.3px;color:#eef2f5;">Elusiveness: This makes you difficult for an enemy to hit. You will lose only 1 Strength point for</div>
<div class="t" style="left:1460.00px;top:1005.09px;font-size:10.3px;color:#eef2f5;">the first three rounds of that battle (See Rules for Fighting).</div>
<div style="left:1438px;top:1030.6000000000001px;width:467px;height:18.2px;background:linear-gradient(#235878,#1d4b68 50%,#193f57);border-radius:3px;box-shadow:0 0 0 1px #1a2630, 0 2.6px 0 #2a3841"></div>
<div class="t" style="left:1460.00px;top:1036.69px;font-size:10.3px;color:#eef2f5;">Madness: An enemy?s actions become completely wild and unpredictable.</div>
<div style="left:1438px;top:1054.7px;width:467px;height:18.2px;background:linear-gradient(#235878,#1d4b68 50%,#193f57);border-radius:3px;box-shadow:0 0 0 1px #1a2630, 0 2.6px 0 #2a3841"></div>
<div class="t" style="left:1460.00px;top:1060.79px;font-size:10.3px;color:#eef2f5;">Revitalization: Restores Strength points to their Initial level (See Rules for Fighting).</div>
</div></body></html>
